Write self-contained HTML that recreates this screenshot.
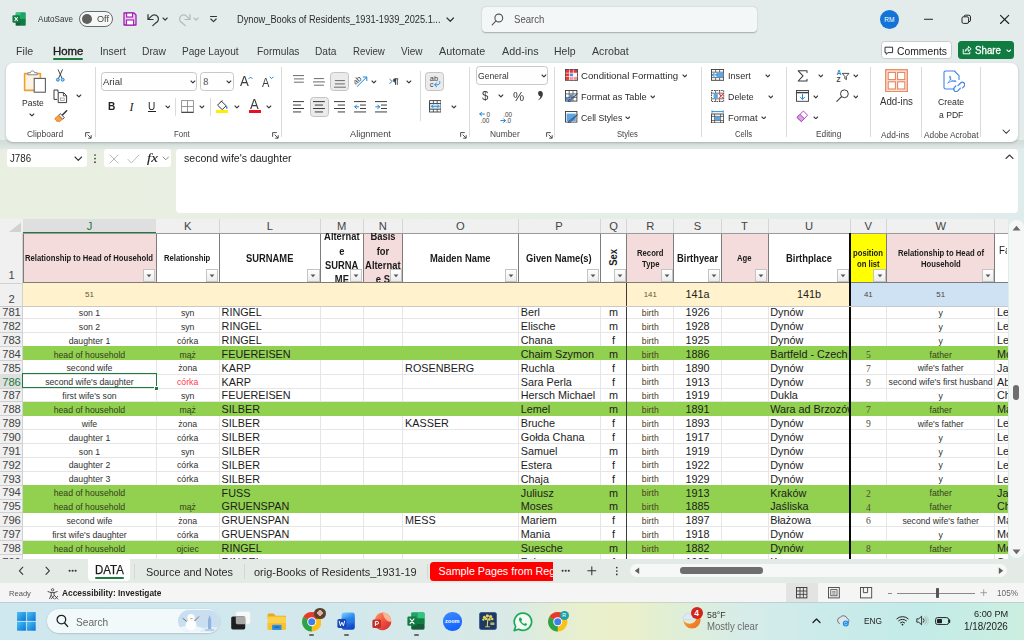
<!DOCTYPE html>
<html><head><meta charset="utf-8"><title>Excel</title><style>
html,body{margin:0;padding:0}
body{width:1024px;height:640px;overflow:hidden;position:relative;font-family:"Liberation Sans",sans-serif;
background:#e3ebeb;}
body>div,body>svg,.abs{position:absolute}
.t{white-space:nowrap}
.g{position:absolute;overflow:hidden}
.g div,.g svg{position:absolute}
</style></head><body>
<div style="left:0;top:120px;width:1024px;height:440px;background:linear-gradient(90deg,#e9efe1 0%,#e8efe2 35%,#e4eee7 65%,#dfecec 100%)"></div>
<div style="left:0;top:120px;width:1024px;height:34px;background:linear-gradient(180deg,#e3ebeb 0%,#e3ebeb 60%,rgba(227,235,235,0) 100%)"></div>
<svg style="left:11.8px;top:12.2px;" width="14" height="14" viewBox="0 0 15 15"><rect x="4" y="0.5" width="10.5" height="14" rx="1.2" fill="#21a366"/>
<rect x="4" y="0.5" width="5.2" height="7" fill="#33c481"/><rect x="9.2" y="7.5" width="5.3" height="7" fill="#107c41"/>
<rect x="9.2" y="0.5" width="5.3" height="7" fill="#21a366"/><rect x="4" y="7.5" width="5.2" height="7" fill="#185c37"/>
<rect x="0.5" y="3.5" width="8" height="8" rx="1" fill="#107c41"/>
<path d="M2.8 5.5 L6.2 9.6 M6.2 5.5 L2.8 9.6" stroke="#fff" stroke-width="1.1"/></svg>
<div class="t" style="left:38.00px;top:13.82px;font-size:9.30px;line-height:11.16px;color:#333;transform:scaleX(0.8678);transform-origin:0 50%;">AutoSave</div>
<div style="left:78.5px;top:11px;width:34px;height:15.5px;border:0.9px solid #6a6a6a;border-radius:9px;background:#f6f8f8;box-sizing:border-box"></div>
<div style="left:81.5px;top:13.7px;width:10px;height:10px;border-radius:5px;background:#5f5f5f"></div>
<div class="t" style="left:96.50px;top:13.34px;font-size:9.76px;line-height:11.71px;color:#444;transform:scaleX(0.9346);transform-origin:0 50%;">Off</div>
<svg style="left:122.5px;top:12px;" width="14" height="14" viewBox="0 0 14 14"><path d="M1 1 H11 L13 3 V13 H1 Z" fill="#e9c9ef" stroke="#a020b0" stroke-width="1.3" stroke-linejoin="round"/>
<rect x="3.6" y="1" width="6" height="4" fill="#fff" stroke="#a020b0" stroke-width="1.1"/>
<rect x="3.4" y="8" width="7.2" height="5" fill="#fff" stroke="#a020b0" stroke-width="1.1"/></svg>
<svg style="left:145.5px;top:11.5px;" width="16" height="15" viewBox="0 0 16 15"><path d="M2 2.5 V7.5 H7" fill="none" stroke="#333" stroke-width="1.2" stroke-linecap="round" stroke-linejoin="round"/>
<path d="M2.3 7.2 L5.2 4.3 A4.1 4.1 0 1 1 10.2 10.6 L6.8 13.6" fill="none" stroke="#333" stroke-width="1.2" stroke-linecap="round"/></svg>
<svg style="left:162.4px;top:17.25px;" width="6.2" height="4.1" viewBox="0 0 6.2 4.1"><path d="M1 1 L3.1 3.1 L5.2 1" fill="none" stroke="#333" stroke-width="1.1" stroke-linecap="round" stroke-linejoin="round"/></svg>
<svg style="left:176px;top:11.5px;" width="16" height="15" viewBox="0 0 16 15"><path d="M14 2.5 V7.5 H9" fill="none" stroke="#b4b8b8" stroke-width="1.2" stroke-linecap="round" stroke-linejoin="round"/>
<path d="M13.7 7.2 L10.8 4.3 A4.1 4.1 0 1 0 5.8 10.6 L9.2 13.6" fill="none" stroke="#b4b8b8" stroke-width="1.2" stroke-linecap="round"/></svg>
<svg style="left:192.9px;top:17.25px;" width="6.2" height="4.1" viewBox="0 0 6.2 4.1"><path d="M1 1 L3.1 3.1 L5.2 1" fill="none" stroke="#b4b8b8" stroke-width="1.1" stroke-linecap="round" stroke-linejoin="round"/></svg>
<svg style="left:209px;top:15px;" width="9" height="9" viewBox="0 0 9 9"><path d="M1.5 1.5 H7.5" stroke="#333" stroke-width="1.1" stroke-linecap="round"/><path d="M1.8 4 L4.5 6.7 L7.2 4" fill="none" stroke="#333" stroke-width="1.1" stroke-linecap="round" stroke-linejoin="round"/></svg>
<div class="t" style="left:237.00px;top:13.80px;font-size:10.00px;line-height:12.00px;color:#2b2b2b;transform:scaleX(0.9243);transform-origin:0 50%;">Dynow_Books of Residents_1931-1939_2025.1...</div>
<svg style="left:445.95px;top:16.675px;" width="8.5" height="5.25" viewBox="0 0 8.5 5.25"><path d="M1 1 L4.25 4.25 L7.5 1" fill="none" stroke="#333" stroke-width="1.2" stroke-linecap="round" stroke-linejoin="round"/></svg>
<div style="left:481.5px;top:7px;width:275.5px;height:24.5px;background:#f4f7f7;border-radius:4px;box-shadow:0 0.5px 1.5px rgba(0,0,0,.28);"></div>
<svg style="left:491px;top:12.5px;" width="13" height="13" viewBox="0 0 13 13"><circle cx="7.8" cy="5" r="3.9" fill="none" stroke="#555" stroke-width="1.1"/><path d="M5 7.9 L1.2 11.8" stroke="#555" stroke-width="1.1" stroke-linecap="round"/></svg>
<div class="t" style="left:514.20px;top:14.40px;font-size:10.00px;line-height:12.00px;color:#555;transform:scaleX(0.9594);transform-origin:0 50%;">Search</div>
<div style="left:879.5px;top:9.5px;width:19.5px;height:19.5px;border-radius:10px;background:#1473d6"></div>
<div class="t" style="left:884.17px;top:15.54px;font-size:6.60px;line-height:7.92px;color:#fff;">RM</div>
<svg style="left:923px;top:14px;" width="12" height="11" viewBox="0 0 12 11"><path d="M1.5 5.2 H9.5" stroke="#222" stroke-width="1.1" stroke-linecap="round"/></svg>
<svg style="left:961.3px;top:13.6px;" width="11" height="11" viewBox="0 0 11 11"><rect x="1" y="2.8" width="6.6" height="6.6" rx="1.5" fill="none" stroke="#222" stroke-width="1"/><path d="M3 2.6 A1.5 1.5 0 0 1 4.4 1.2 H7.8 A1.7 1.7 0 0 1 9.5 2.9 V6.2 A1.5 1.5 0 0 1 8 7.7" fill="none" stroke="#222" stroke-width="1"/></svg>
<svg style="left:999px;top:13.5px;" width="12" height="12" viewBox="0 0 12 12"><path d="M1.5 1.3 L9.7 9.5 M9.7 1.3 L1.5 9.5" stroke="#222" stroke-width="1.15" stroke-linecap="round"/></svg>
<div class="t" style="left:16.30px;top:45.18px;font-size:10.70px;line-height:12.84px;color:#3a3a3a;transform:scaleX(0.9976);transform-origin:0 50%;">File</div>
<div class="t" style="left:53.00px;top:45.18px;font-size:10.70px;line-height:12.84px;color:#1b1b1b;transform:scaleX(1.0616);transform-origin:0 50%;-webkit-text-stroke:0.35px #1b1b1b;">Home</div>
<div class="t" style="left:99.50px;top:45.18px;font-size:10.70px;line-height:12.84px;color:#3a3a3a;transform:scaleX(0.9641);transform-origin:0 50%;">Insert</div>
<div class="t" style="left:142.00px;top:45.18px;font-size:10.70px;line-height:12.84px;color:#3a3a3a;transform:scaleX(0.9612);transform-origin:0 50%;">Draw</div>
<div class="t" style="left:182.30px;top:45.18px;font-size:10.70px;line-height:12.84px;color:#3a3a3a;transform:scaleX(0.9436);transform-origin:0 50%;">Page Layout</div>
<div class="t" style="left:256.50px;top:45.18px;font-size:10.70px;line-height:12.84px;color:#3a3a3a;transform:scaleX(0.9530);transform-origin:0 50%;">Formulas</div>
<div class="t" style="left:314.50px;top:45.18px;font-size:10.70px;line-height:12.84px;color:#3a3a3a;transform:scaleX(0.9512);transform-origin:0 50%;">Data</div>
<div class="t" style="left:352.50px;top:45.18px;font-size:10.70px;line-height:12.84px;color:#3a3a3a;transform:scaleX(0.9064);transform-origin:0 50%;">Review</div>
<div class="t" style="left:401.00px;top:45.18px;font-size:10.70px;line-height:12.84px;color:#3a3a3a;transform:scaleX(0.9348);transform-origin:0 50%;">View</div>
<div class="t" style="left:439.00px;top:45.18px;font-size:10.70px;line-height:12.84px;color:#3a3a3a;transform:scaleX(1.0087);transform-origin:0 50%;">Automate</div>
<div class="t" style="left:501.70px;top:45.18px;font-size:10.70px;line-height:12.84px;color:#3a3a3a;transform:scaleX(1.0088);transform-origin:0 50%;">Add-ins</div>
<div class="t" style="left:554.30px;top:45.18px;font-size:10.70px;line-height:12.84px;color:#3a3a3a;transform:scaleX(0.9815);transform-origin:0 50%;">Help</div>
<div class="t" style="left:591.60px;top:45.18px;font-size:10.70px;line-height:12.84px;color:#3a3a3a;transform:scaleX(0.9979);transform-origin:0 50%;">Acrobat</div>
<div style="left:53.3px;top:58.2px;width:30px;height:1.8px;background:#1e7b3e;border-radius:1px"></div>
<div style="left:880.5px;top:40.7px;width:71px;height:18.6px;background:#fff;border:1px solid #c9cccc;border-radius:3.5px;box-sizing:border-box"></div>
<svg style="left:884px;top:45.5px;" width="10" height="10" viewBox="0 0 10 10"><path d="M1 1.2 H8.6 V6.6 H4 L2.2 8.4 V6.6 H1 Z" fill="none" stroke="#333" stroke-width="1" stroke-linejoin="round"/></svg>
<div class="t" style="left:896.70px;top:44.56px;font-size:11.07px;line-height:13.28px;color:#222;transform:scaleX(0.9346);transform-origin:0 50%;">Comments</div>
<div style="left:958.4px;top:40.7px;width:56px;height:18.6px;background:#107c41;border-radius:3.5px"></div>
<svg style="left:962px;top:45px;" width="10" height="10" viewBox="0 0 10 10"><path d="M1.2 4.2 V8.8 H7.8 V6.6" fill="none" stroke="#fff" stroke-width="1" stroke-linejoin="round"/><path d="M3.2 6.4 C3.4 4.2 4.8 3.2 6.4 3.2 V1.4 L9.2 3.9 L6.4 6.3 V4.6 C5 4.6 4 5 3.2 6.4 Z" fill="none" stroke="#fff" stroke-width="0.9" stroke-linejoin="round"/></svg>
<div class="t" style="left:974.80px;top:44.96px;font-size:10.40px;line-height:12.48px;color:#fff;transform:scaleX(0.9368);transform-origin:0 50%;-webkit-text-stroke:0.3px #fff;">Share</div>
<svg style="left:1005.8000000000001px;top:48.7px;" width="5.6" height="3.8" viewBox="0 0 5.6 3.8"><path d="M1 1 L2.8 2.8 L4.6 1" fill="none" stroke="#fff" stroke-width="1.1" stroke-linecap="round" stroke-linejoin="round"/></svg>
<div style="left:0;top:140px;width:1024px;height:9px;background:linear-gradient(180deg,#d2dbd7 0%,#d6dfdb 35%,#e0e8e4 100%)"></div>
<div style="left:6.3px;top:62.7px;width:1011.4px;height:79.5px;background:#ffffff;border-radius:7px;box-shadow:0 1px 2.5px rgba(0,0,0,.22);"></div>
<svg style="left:22.5px;top:68.5px;" width="24" height="25" viewBox="0 0 24 25"><path d="M1.6 4.6 H17.4 V21.4 H1.6 Z" fill="#fdf3e3" stroke="#f0a030" stroke-width="1.6" stroke-linejoin="round"/>
<path d="M4.8 5.8 V3.8 H7.4 C7.4 1.3 11.6 1.3 11.6 3.8 H14.2 V5.8 Z" fill="#ffffff" stroke="#7a7a7a" stroke-width="0.9"/>
<rect x="11.2" y="9.4" width="11.2" height="13.8" fill="#ffffff" stroke="#5f5f5f" stroke-width="1.1"/></svg>
<div class="t" style="left:21.50px;top:97.26px;font-size:9.90px;line-height:11.88px;color:#2b2b2b;transform:scaleX(0.8651);transform-origin:0 50%;">Paste</div>
<svg style="left:29.1px;top:113.35px;" width="5.8" height="3.9" viewBox="0 0 5.8 3.9"><path d="M1 1 L2.9 2.9 L4.8 1" fill="none" stroke="#3b3b3b" stroke-width="1.1" stroke-linecap="round" stroke-linejoin="round"/></svg>
<svg style="left:55px;top:68.5px;" width="11" height="14" viewBox="0 0 11 14"><path d="M3.2 0.8 L6.9 9 M7.4 0.8 L3.7 9" stroke="#3b3b3b" stroke-width="0.95" stroke-linecap="round"/>
<circle cx="2.9" cy="10.7" r="1.5" fill="#9ccdf2" stroke="#1a86d9" stroke-width="0.9"/><circle cx="7.7" cy="10.7" r="1.5" fill="#9ccdf2" stroke="#1a86d9" stroke-width="0.9"/></svg>
<svg style="left:53px;top:89px;" width="15" height="14.5" viewBox="0 0 15 14.5"><path d="M5 3.4 V1 H1 V10.4 H4.2" fill="none" stroke="#3b3b3b" stroke-width="1"/>
<path d="M5.2 3.6 H10.6 L13.6 6.6 V13.6 H5.2 Z" fill="#ffffff" stroke="#3b3b3b" stroke-width="1" stroke-linejoin="round"/><path d="M10.4 3.8 V6.8 H13.4" fill="none" stroke="#3b3b3b" stroke-width="0.9"/>
<rect x="7.6" y="9" width="3.6" height="2.4" fill="none" stroke="#8a8a8a" stroke-width="0.7"/></svg>
<svg style="left:76.1px;top:94.05px;" width="5.8" height="3.9" viewBox="0 0 5.8 3.9"><path d="M1 1 L2.9 2.9 L4.8 1" fill="none" stroke="#3b3b3b" stroke-width="1.1" stroke-linecap="round" stroke-linejoin="round"/></svg>
<svg style="left:53.5px;top:110px;" width="14" height="12.5" viewBox="0 0 14 12.5"><path d="M8.2 5.2 L12.6 0.8" stroke="#3b3b3b" stroke-width="1.6" stroke-linecap="round"/>
<path d="M6.2 3.6 L10.4 7.6 L8.6 9.2 L4.6 5.2 Z" fill="#ffffff" stroke="#3b3b3b" stroke-width="0.9" stroke-linejoin="round"/>
<path d="M4.4 5.6 L8.2 9.4 L5.2 11.8 L3.8 10.6 L3.4 11.8 L0.8 8.6 Z" fill="#f5a545" stroke="#e8761a" stroke-width="0.9" stroke-linejoin="round"/></svg>
<div class="t" style="left:27.30px;top:129.06px;font-size:8.90px;line-height:10.68px;color:#444;transform:scaleX(0.9502);transform-origin:0 50%;">Clipboard</div>
<svg style="left:85.2px;top:131.9px;" width="7" height="7" viewBox="0 0 7 7"><path d="M0.6 4.8 V0.6 H4.8" fill="none" stroke="#3b3b3b" stroke-width="0.9"/><path d="M2.6 2.6 L6 6 M6.2 3.2 V6.2 H3.2" fill="none" stroke="#3b3b3b" stroke-width="0.9"/></svg>
<div style="left:94.69999999999999px;top:66.8px;width:0.9px;height:70.2px;background:#d9dcdb;"></div>
<div style="left:101.4px;top:71.8px;width:96px;height:19.7px;border:1px solid #c6c9c9;border-radius:3.5px;box-sizing:border-box;background:#fdfefd"></div>
<div class="t" style="left:102.80px;top:76.16px;font-size:9.90px;line-height:11.88px;color:#333;transform:scaleX(0.9643);transform-origin:0 50%;">Arial</div>
<svg style="left:190.1px;top:80.05px;" width="5.8" height="3.9" viewBox="0 0 5.8 3.9"><path d="M1 1 L2.9 2.9 L4.8 1" fill="none" stroke="#3b3b3b" stroke-width="1.1" stroke-linecap="round" stroke-linejoin="round"/></svg>
<div style="left:199.8px;top:71.8px;width:34.2px;height:19.7px;border:1px solid #c6c9c9;border-radius:3.5px;box-sizing:border-box;background:#fdfefd"></div>
<div class="t" style="left:203.30px;top:75.90px;font-size:10.00px;line-height:12.00px;color:#444;font-family:'Liberation Serif',serif;">8</div>
<svg style="left:226.1px;top:80.05px;" width="5.8" height="3.9" viewBox="0 0 5.8 3.9"><path d="M1 1 L2.9 2.9 L4.8 1" fill="none" stroke="#3b3b3b" stroke-width="1.1" stroke-linecap="round" stroke-linejoin="round"/></svg>
<div class="t" style="left:239.80px;top:73.27px;font-size:14.12px;line-height:16.94px;color:#3b3b3b;transform:scaleX(0.9346);transform-origin:0 50%;">A</div>
<svg style="left:247.70000000000002px;top:76.2px;" width="5.2" height="3.6" viewBox="0 0 5.2 3.6"><path d="M1 2.6 L2.6 1 L4.2 2.6" fill="none" stroke="#1a86d9" stroke-width="1.0" stroke-linecap="round" stroke-linejoin="round"/></svg>
<div class="t" style="left:261.90px;top:75.60px;font-size:11.87px;line-height:14.24px;color:#3b3b3b;transform:scaleX(0.9346);transform-origin:0 50%;">A</div>
<svg style="left:268.59999999999997px;top:75.8px;" width="5.2" height="3.6" viewBox="0 0 5.2 3.6"><path d="M1 1 L2.6 2.6 L4.2 1" fill="none" stroke="#1a86d9" stroke-width="1.0" stroke-linecap="round" stroke-linejoin="round"/></svg>
<div class="t" style="left:107.55px;top:100.31px;font-size:11.00px;line-height:13.20px;color:#222;font-weight:bold;transform:scaleX(0.9200);transform-origin:0 50%;">B</div>
<div class="t" style="left:129.50px;top:99.64px;font-size:12.00px;line-height:14.40px;color:#222;font-style:italic;font-family:'Liberation Serif',serif;">I</div>
<div class="t" style="left:148.40px;top:99.82px;font-size:10.82px;line-height:12.98px;color:#222;transform:scaleX(0.9346);transform-origin:0 50%;">U</div>
<div style="left:148.4px;top:111.4px;width:7.3px;height:0.9px;background:#222;"></div>
<svg style="left:164.5px;top:105.25px;" width="5.8" height="3.9" viewBox="0 0 5.8 3.9"><path d="M1 1 L2.9 2.9 L4.8 1" fill="none" stroke="#3b3b3b" stroke-width="1.1" stroke-linecap="round" stroke-linejoin="round"/></svg>
<div style="left:175px;top:98px;width:0.9px;height:18px;background:#d9dcdb;"></div>
<svg style="left:180.5px;top:100.3px;" width="13" height="13" viewBox="0 0 13 13"><rect x="0.6" y="0.6" width="11.8" height="11.8" fill="none" stroke="#8c8c8c" stroke-width="0.9"/><path d="M6.5 0.6 V12.4 M0.6 6.5 H12.4" stroke="#8c8c8c" stroke-width="0.9"/><path d="M0.5 12.3 H12.5" stroke="#3b3b3b" stroke-width="1.1"/></svg>
<svg style="left:199.1px;top:105.25px;" width="5.8" height="3.9" viewBox="0 0 5.8 3.9"><path d="M1 1 L2.9 2.9 L4.8 1" fill="none" stroke="#3b3b3b" stroke-width="1.1" stroke-linecap="round" stroke-linejoin="round"/></svg>
<div style="left:210.1px;top:98px;width:0.9px;height:18px;background:#d9dcdb;"></div>
<svg style="left:216px;top:99.5px;" width="13" height="11" viewBox="0 0 13 11"><path d="M5.4 1.2 L10.2 5.8 L6.2 9.6 L1.6 5.2 Z" fill="none" stroke="#3b3b3b" stroke-width="1" stroke-linejoin="round"/>
<path d="M4.4 2.2 L6.6 0.6" stroke="#3b3b3b" stroke-width="0.9"/><path d="M10.4 5.6 C11.6 7 12 8 11.2 8.8 C10.4 9.4 9.6 8.6 10.4 5.6Z" fill="#1a86d9"/></svg>
<div style="left:216.4px;top:110.4px;width:11.8px;height:2.8px;background:#ffee00;"></div>
<svg style="left:234.0px;top:105.25px;" width="5.8" height="3.9" viewBox="0 0 5.8 3.9"><path d="M1 1 L2.9 2.9 L4.8 1" fill="none" stroke="#3b3b3b" stroke-width="1.1" stroke-linecap="round" stroke-linejoin="round"/></svg>
<div class="t" style="left:250.30px;top:96.37px;font-size:13.96px;line-height:16.75px;color:#3b3b3b;transform:scaleX(0.9346);transform-origin:0 50%;">A</div>
<div style="left:248.6px;top:110.4px;width:12.1px;height:2.8px;background:#e81123;"></div>
<svg style="left:266.1px;top:105.25px;" width="5.8" height="3.9" viewBox="0 0 5.8 3.9"><path d="M1 1 L2.9 2.9 L4.8 1" fill="none" stroke="#3b3b3b" stroke-width="1.1" stroke-linecap="round" stroke-linejoin="round"/></svg>
<div class="t" style="left:173.80px;top:129.06px;font-size:8.90px;line-height:10.68px;color:#444;transform:scaleX(0.8816);transform-origin:0 50%;">Font</div>
<svg style="left:272.2px;top:131.9px;" width="7" height="7" viewBox="0 0 7 7"><path d="M0.6 4.8 V0.6 H4.8" fill="none" stroke="#3b3b3b" stroke-width="0.9"/><path d="M2.6 2.6 L6 6 M6.2 3.2 V6.2 H3.2" fill="none" stroke="#3b3b3b" stroke-width="0.9"/></svg>
<div style="left:281.40000000000003px;top:66.8px;width:0.9px;height:70.2px;background:#d9dcdb;"></div>
<svg style="left:292.5px;top:75.4px;" width="11.8" height="11.099999999999998" viewBox="0 0 11.8 11.099999999999998"><path d="M0.3 0.6 H11.5" stroke="#6a6a6a" stroke-width="1.0" stroke-linecap="round"/><path d="M1.3 3.9 H10.5" stroke="#6a6a6a" stroke-width="1.0" stroke-linecap="round"/><path d="M1.3 7.199999999999999 H10.5" stroke="#6a6a6a" stroke-width="1.0" stroke-linecap="round"/></svg>
<svg style="left:313px;top:77.6px;" width="11.8" height="11.099999999999998" viewBox="0 0 11.8 11.099999999999998"><path d="M1.3 0.6 H10.5" stroke="#6a6a6a" stroke-width="1.0" stroke-linecap="round"/><path d="M0.3 3.9 H11.5" stroke="#6a6a6a" stroke-width="1.0" stroke-linecap="round"/><path d="M1.3 7.199999999999999 H10.5" stroke="#6a6a6a" stroke-width="1.0" stroke-linecap="round"/></svg>
<div style="left:330.2px;top:71.8px;width:19px;height:19.5px;background:#ebebeb;border:1px solid #c4c4c4;border-radius:3.5px;box-sizing:border-box"></div>
<svg style="left:334.2px;top:79.8px;" width="11.8" height="11.099999999999998" viewBox="0 0 11.8 11.099999999999998"><path d="M1.3 0.6 H10.5" stroke="#6a6a6a" stroke-width="1.0" stroke-linecap="round"/><path d="M1.3 3.9 H10.5" stroke="#6a6a6a" stroke-width="1.0" stroke-linecap="round"/><path d="M0.3 7.199999999999999 H11.5" stroke="#6a6a6a" stroke-width="1.0" stroke-linecap="round"/></svg>
<svg style="left:353.5px;top:74.5px;" width="14" height="12.5" viewBox="0 0 14 12.5"><text x="-0.6" y="7.4" font-family="Liberation Sans" font-size="7.8" fill="#3b3b3b" transform="rotate(-42 4 6)">ab</text><path d="M3 11.6 L12.6 2.2 M9.2 2 H12.8 V5.6" fill="none" stroke="#1a86d9" stroke-width="1" stroke-linecap="round" stroke-linejoin="round"/></svg>
<svg style="left:371.1px;top:80.05px;" width="5.8" height="3.9" viewBox="0 0 5.8 3.9"><path d="M1 1 L2.9 2.9 L4.8 1" fill="none" stroke="#3b3b3b" stroke-width="1.1" stroke-linecap="round" stroke-linejoin="round"/></svg>
<svg style="left:389px;top:78px;" width="11" height="7.5" viewBox="0 0 11 7.5"><path d="M0.8 1.2 L3 3.4 L0.8 5.6" fill="none" stroke="#1a86d9" stroke-width="1" stroke-linecap="round" stroke-linejoin="round"/><path d="M7.6 0.8 H5.8 A1.6 1.6 0 0 0 5.8 4 H6.6 V6.8 M6.6 0.8 V6.8 M8.4 0.8 V6.8 M6 0.8 H9.4" fill="none" stroke="#3b3b3b" stroke-width="0.8"/><circle cx="5.8" cy="2.4" r="1.3" fill="#3b3b3b"/></svg>
<svg style="left:406.40000000000003px;top:80.05px;" width="5.8" height="3.9" viewBox="0 0 5.8 3.9"><path d="M1 1 L2.9 2.9 L4.8 1" fill="none" stroke="#3b3b3b" stroke-width="1.1" stroke-linecap="round" stroke-linejoin="round"/></svg>
<div style="left:420.2px;top:70.7px;width:0.9px;height:50px;background:#d9dcdb;"></div>
<div style="left:425.3px;top:71.8px;width:19.2px;height:19.5px;background:#ebebeb;border:1px solid #c4c4c4;border-radius:3.5px;box-sizing:border-box"></div>
<svg style="left:429px;top:75px;" width="12.5" height="13.5" viewBox="0 0 12.5 13.5"><text x="0.8" y="5.8" font-family="Liberation Sans" font-size="7.4" fill="#3b3b3b">ab</text><text x="0.8" y="12" font-family="Liberation Sans" font-size="7.4" fill="#3b3b3b">c</text><path d="M10.8 6.6 C11.4 9.4 9.4 10.2 6 9.8 M7.6 7.8 L5.6 9.8 L7.6 11.8" fill="none" stroke="#1a86d9" stroke-width="0.95" stroke-linecap="round" stroke-linejoin="round"/></svg>
<svg style="left:292.5px;top:101.4px;" width="11.8" height="15.0" viewBox="0 0 11.8 15.0"><path d="M0.3 0.6 H11.5" stroke="#3b3b3b" stroke-width="1.0" stroke-linecap="round"/><path d="M0.3 4.05 H7.7" stroke="#3b3b3b" stroke-width="1.0" stroke-linecap="round"/><path d="M0.3 7.5 H11.5" stroke="#3b3b3b" stroke-width="1.0" stroke-linecap="round"/><path d="M0.3 10.950000000000001 H7.7" stroke="#3b3b3b" stroke-width="1.0" stroke-linecap="round"/></svg>
<div style="left:309.5px;top:97.3px;width:19.2px;height:19.5px;background:#ebebeb;border:1px solid #c4c4c4;border-radius:3.5px;box-sizing:border-box"></div>
<svg style="left:313.2px;top:101.4px;" width="11.8" height="15.0" viewBox="0 0 11.8 15.0"><path d="M0.3 0.6 H11.5" stroke="#3b3b3b" stroke-width="1.0" stroke-linecap="round"/><path d="M2.2 4.05 H9.6" stroke="#3b3b3b" stroke-width="1.0" stroke-linecap="round"/><path d="M0.3 7.5 H11.5" stroke="#3b3b3b" stroke-width="1.0" stroke-linecap="round"/><path d="M2.2 10.950000000000001 H9.6" stroke="#3b3b3b" stroke-width="1.0" stroke-linecap="round"/></svg>
<svg style="left:333.7px;top:101.4px;" width="11.8" height="15.0" viewBox="0 0 11.8 15.0"><path d="M0.3 0.6 H11.5" stroke="#3b3b3b" stroke-width="1.0" stroke-linecap="round"/><path d="M4.1000000000000005 4.05 H11.5" stroke="#3b3b3b" stroke-width="1.0" stroke-linecap="round"/><path d="M0.3 7.5 H11.5" stroke="#3b3b3b" stroke-width="1.0" stroke-linecap="round"/><path d="M4.1000000000000005 10.950000000000001 H11.5" stroke="#3b3b3b" stroke-width="1.0" stroke-linecap="round"/></svg>
<svg style="left:354.4px;top:101.4px;" width="12.2" height="12" viewBox="0 0 12.2 12"><path d="M0.4 0.6 H11.6 M6.4 4.05 H11.6 M6.4 7.5 H11.6 M0.4 10.95 H11.6" stroke="#3b3b3b" stroke-width="1" stroke-linecap="round"/><path d="M0.8 5.8 H4.6 M2.6 4 L0.8 5.8 L2.6 7.6" fill="none" stroke="#1a86d9" stroke-width="1" stroke-linecap="round" stroke-linejoin="round"/></svg>
<svg style="left:375px;top:101.4px;" width="12.2" height="12" viewBox="0 0 12.2 12"><path d="M0.4 0.6 H11.6 M6.4 4.05 H11.6 M6.4 7.5 H11.6 M0.4 10.95 H11.6" stroke="#3b3b3b" stroke-width="1" stroke-linecap="round"/><path d="M0.8 5.8 H4.6 M2.8 4 L4.6 5.8 L2.8 7.6" fill="none" stroke="#1a86d9" stroke-width="1" stroke-linecap="round" stroke-linejoin="round"/></svg>
<svg style="left:428.6px;top:100.4px;" width="12.6" height="12.6" viewBox="0 0 12.6 12.6"><rect x="0.6" y="0.6" width="11.4" height="11.4" fill="none" stroke="#3b3b3b" stroke-width="0.9"/><rect x="0.6" y="3.4" width="11.4" height="5.8" fill="#d6ebfa" stroke="#3b3b3b" stroke-width="0.9"/><path d="M4.4 0.6 V3.4 M8.2 0.6 V3.4 M4.4 9.2 V12 M8.2 9.2 V12" stroke="#3b3b3b" stroke-width="0.8"/><path d="M2.6 6.3 H10 M4 4.9 L2.6 6.3 L4 7.7 M8.6 4.9 L10 6.3 L8.6 7.7" fill="none" stroke="#1a86d9" stroke-width="0.9" stroke-linecap="round" stroke-linejoin="round"/></svg>
<svg style="left:450.90000000000003px;top:105.25px;" width="5.8" height="3.9" viewBox="0 0 5.8 3.9"><path d="M1 1 L2.9 2.9 L4.8 1" fill="none" stroke="#3b3b3b" stroke-width="1.1" stroke-linecap="round" stroke-linejoin="round"/></svg>
<div class="t" style="left:350.00px;top:129.06px;font-size:8.90px;line-height:10.68px;color:#444;transform:scaleX(1.0359);transform-origin:0 50%;">Alignment</div>
<svg style="left:459.8px;top:131.9px;" width="7" height="7" viewBox="0 0 7 7"><path d="M0.6 4.8 V0.6 H4.8" fill="none" stroke="#3b3b3b" stroke-width="0.9"/><path d="M2.6 2.6 L6 6 M6.2 3.2 V6.2 H3.2" fill="none" stroke="#3b3b3b" stroke-width="0.9"/></svg>
<div style="left:469.40000000000003px;top:66.8px;width:0.9px;height:70.2px;background:#d9dcdb;"></div>
<div style="left:476.3px;top:65.6px;width:72.1px;height:19.2px;border:1px solid #c6c9c9;border-radius:3.5px;box-sizing:border-box;background:#fdfefd"></div>
<div class="t" style="left:478.20px;top:69.96px;font-size:9.90px;line-height:11.88px;color:#333;transform:scaleX(0.8716);transform-origin:0 50%;">General</div>
<svg style="left:541.1px;top:73.85px;" width="5.8" height="3.9" viewBox="0 0 5.8 3.9"><path d="M1 1 L2.9 2.9 L4.8 1" fill="none" stroke="#3b3b3b" stroke-width="1.1" stroke-linecap="round" stroke-linejoin="round"/></svg>
<div class="t" style="left:482.32px;top:88.31px;font-size:13.60px;line-height:16.32px;color:#3b3b3b;transform:scaleX(0.8400);transform-origin:0 50%;">$</div>
<svg style="left:498.1px;top:94.35px;" width="5.8" height="3.9" viewBox="0 0 5.8 3.9"><path d="M1 1 L2.9 2.9 L4.8 1" fill="none" stroke="#3b3b3b" stroke-width="1.1" stroke-linecap="round" stroke-linejoin="round"/></svg>
<div class="t" style="left:512.97px;top:88.54px;font-size:13.20px;line-height:15.84px;color:#3b3b3b;transform:scaleX(0.9600);transform-origin:0 50%;">%</div>
<svg style="left:535.6px;top:90.4px;" width="8.4" height="12" viewBox="0 0 7 10"><path d="M3.4 0.8 C5.4 0.8 6 2.6 5.6 4.4 C5.2 6.2 3.8 7.8 1.6 8.6 C3 7.4 3.6 6.2 3.6 5.2 C1.6 5.2 0.8 0.8 3.4 0.8Z" fill="#3b3b3b"/></svg>
<svg style="left:479.4px;top:110.5px;" width="13.5" height="13" viewBox="0 0 13.5 13"><path d="M0.8 3 H5.4 M2.6 1.2 L0.8 3 L2.6 4.8" fill="none" stroke="#1a86d9" stroke-width="1" stroke-linecap="round" stroke-linejoin="round"/><text x="7.6" y="5.6" font-family="Liberation Sans" font-size="6.4" fill="#3b3b3b">0</text><text x="1.4" y="12.2" font-family="Liberation Sans" font-size="6.4" fill="#3b3b3b">.00</text></svg>
<svg style="left:500px;top:110.5px;" width="13.5" height="13" viewBox="0 0 13.5 13"><text x="3.2" y="5.6" font-family="Liberation Sans" font-size="6.4" fill="#3b3b3b">.00</text><path d="M0.8 9.6 H5.4 M3.6 7.8 L5.4 9.6 L3.6 11.4" fill="none" stroke="#1a86d9" stroke-width="1" stroke-linecap="round" stroke-linejoin="round"/><text x="5.8" y="12.2" font-family="Liberation Sans" font-size="6.4" fill="#3b3b3b">.0</text></svg>
<div class="t" style="left:490.40px;top:129.06px;font-size:8.90px;line-height:10.68px;color:#444;transform:scaleX(0.9414);transform-origin:0 50%;">Number</div>
<svg style="left:545.6px;top:131.9px;" width="7" height="7" viewBox="0 0 7 7"><path d="M0.6 4.8 V0.6 H4.8" fill="none" stroke="#3b3b3b" stroke-width="0.9"/><path d="M2.6 2.6 L6 6 M6.2 3.2 V6.2 H3.2" fill="none" stroke="#3b3b3b" stroke-width="0.9"/></svg>
<div style="left:554.4px;top:66.8px;width:0.9px;height:70.2px;background:#d9dcdb;"></div>
<svg style="left:564.6px;top:69.4px;" width="13" height="11.8" viewBox="0 0 13 11.8"><rect x="0.5" y="0.5" width="12" height="10.8" fill="#ffffff" stroke="#3b3b3b" stroke-width="0.9"/><rect x="0.9" y="0.9" width="3.6" height="10" fill="#e8383d"/><rect x="4.5" y="0.9" width="7.6" height="3.2" fill="#e8383d"/><rect x="4.5" y="7.6" width="7.6" height="3.3" fill="#f29a9d"/><rect x="4.6" y="4.3" width="3.6" height="3.2" fill="#4a90d9"/><path d="M0.5 4.1 H12.5 M0.5 7.5 H12.5 M4.5 0.5 V11.3 M8.4 0.5 V11.3" stroke="#fff" stroke-width="0.6"/></svg>
<div class="t" style="left:581.00px;top:70.26px;font-size:9.90px;line-height:11.88px;color:#2b2b2b;transform:scaleX(0.9779);transform-origin:0 50%;">Conditional Formatting</div>
<svg style="left:681.5px;top:73.89999999999999px;" width="5.6" height="3.8" viewBox="0 0 5.6 3.8"><path d="M1 1 L2.8 2.8 L4.6 1" fill="none" stroke="#3b3b3b" stroke-width="1.1" stroke-linecap="round" stroke-linejoin="round"/></svg>
<svg style="left:564.6px;top:90px;" width="13.4" height="12.4" viewBox="0 0 13.4 12.4"><rect x="0.5" y="0.5" width="11.4" height="10.6" fill="#ffffff" stroke="#3b3b3b" stroke-width="0.9"/><path d="M0.5 3.9 H11.9 M0.5 7.4 H11.9 M4.2 0.5 V11.1 M8 0.5 V11.1" stroke="#3b3b3b" stroke-width="0.7"/><rect x="4.6" y="4.3" width="3" height="2.7" fill="#4a90d9"/><rect x="0.9" y="7.8" width="3" height="2.9" fill="#4a90d9"/><path d="M12.6 3.6 L7.6 8.8 L4.8 11.9 L3.2 11.6 L3.6 10.2 Z" fill="#4a90d9" stroke="#3b3b3b" stroke-width="0.7" stroke-linejoin="round"/></svg>
<div class="t" style="left:581.00px;top:91.16px;font-size:9.90px;line-height:11.88px;color:#2b2b2b;transform:scaleX(0.9294);transform-origin:0 50%;">Format as Table</div>
<svg style="left:649.9000000000001px;top:94.89999999999999px;" width="5.6" height="3.8" viewBox="0 0 5.6 3.8"><path d="M1 1 L2.8 2.8 L4.6 1" fill="none" stroke="#3b3b3b" stroke-width="1.1" stroke-linecap="round" stroke-linejoin="round"/></svg>
<svg style="left:564.6px;top:111px;" width="13.4" height="12.4" viewBox="0 0 13.4 12.4"><rect x="0.5" y="0.5" width="11.4" height="10.6" fill="#ffffff" stroke="#3b3b3b" stroke-width="0.9"/><rect x="1.6" y="2.6" width="9.2" height="7.4" fill="#5ba7e6"/><path d="M12.6 3.6 L7.6 8.8 L4.8 11.9 L3.2 11.6 L3.6 10.2 Z" fill="#4a90d9" stroke="#3b3b3b" stroke-width="0.7" stroke-linejoin="round"/></svg>
<div class="t" style="left:581.00px;top:111.96px;font-size:9.90px;line-height:11.88px;color:#2b2b2b;transform:scaleX(0.8853);transform-origin:0 50%;">Cell Styles</div>
<svg style="left:624.9000000000001px;top:115.69999999999999px;" width="5.6" height="3.8" viewBox="0 0 5.6 3.8"><path d="M1 1 L2.8 2.8 L4.6 1" fill="none" stroke="#3b3b3b" stroke-width="1.1" stroke-linecap="round" stroke-linejoin="round"/></svg>
<div class="t" style="left:617.10px;top:129.06px;font-size:8.90px;line-height:10.68px;color:#444;transform:scaleX(0.8623);transform-origin:0 50%;">Styles</div>
<div style="left:701.1px;top:66.8px;width:0.9px;height:70.2px;background:#d9dcdb;"></div>
<svg style="left:711.2px;top:69.4px;" width="13.2" height="11.8" viewBox="0 0 13.2 11.8"><rect x="0.5" y="0.5" width="12.2" height="10.8" fill="#ffffff" stroke="#3b3b3b" stroke-width="0.9"/><path d="M0.5 3.2 H12.7 M0.5 8.6 H12.7 M4.6 0.5 V3.2 M8.6 0.5 V3.2 M4.6 8.6 V11.3 M8.6 8.6 V11.3" stroke="#3b3b3b" stroke-width="0.7"/><rect x="5.4" y="3.6" width="6.9" height="4.6" fill="#5ba7e6"/><path d="M1.4 5.9 H6 M3 4.3 L1.4 5.9 L3 7.5" fill="none" stroke="#1a86d9" stroke-width="1" stroke-linecap="round" stroke-linejoin="round"/></svg>
<div class="t" style="left:728.00px;top:70.26px;font-size:9.90px;line-height:11.88px;color:#2b2b2b;transform:scaleX(0.9208);transform-origin:0 50%;">Insert</div>
<svg style="left:764.6px;top:73.89999999999999px;" width="5.6" height="3.8" viewBox="0 0 5.6 3.8"><path d="M1 1 L2.8 2.8 L4.6 1" fill="none" stroke="#3b3b3b" stroke-width="1.1" stroke-linecap="round" stroke-linejoin="round"/></svg>
<svg style="left:711.2px;top:90px;" width="13.6" height="12" viewBox="0 0 13.6 12"><rect x="0.5" y="0.5" width="12.2" height="11" fill="#ffffff" stroke="#3b3b3b" stroke-width="0.9" stroke-dasharray="1.6 0.8"/><path d="M0.5 3.2 H12.7 M0.5 8.8 H12.7 M4.6 0.5 V3.2 M8.6 0.5 V3.2 M4.6 8.8 V11.5 M8.6 8.8 V11.5" stroke="#3b3b3b" stroke-width="0.7"/><rect x="2.6" y="3.7" width="4.2" height="4.6" fill="#5ba7e6"/><path d="M8.4 4.2 L12 7.8 M12 4.2 L8.4 7.8" stroke="#e8383d" stroke-width="1.1" stroke-linecap="round"/></svg>
<div class="t" style="left:728.00px;top:91.16px;font-size:9.90px;line-height:11.88px;color:#2b2b2b;transform:scaleX(0.8980);transform-origin:0 50%;">Delete</div>
<svg style="left:767.9000000000001px;top:94.89999999999999px;" width="5.6" height="3.8" viewBox="0 0 5.6 3.8"><path d="M1 1 L2.8 2.8 L4.6 1" fill="none" stroke="#3b3b3b" stroke-width="1.1" stroke-linecap="round" stroke-linejoin="round"/></svg>
<svg style="left:711.2px;top:110px;" width="13.2" height="13.4" viewBox="0 0 13.2 13.4"><path d="M1 1.6 H12.2 M1 0.4 V2.8 M12.2 0.4 V2.8" stroke="#1a86d9" stroke-width="0.9"/><rect x="0.5" y="4" width="12.2" height="8.9" fill="#ffffff" stroke="#3b3b3b" stroke-width="0.9"/><path d="M0.5 6.4 H12.7 M0.5 10.6 H12.7 M3.6 4 V12.9 M9.6 4 V12.9" stroke="#3b3b3b" stroke-width="0.7"/><rect x="4" y="6.8" width="5.2" height="3.4" fill="#5ba7e6"/></svg>
<div class="t" style="left:728.00px;top:111.96px;font-size:9.90px;line-height:11.88px;color:#2b2b2b;transform:scaleX(0.9440);transform-origin:0 50%;">Format</div>
<svg style="left:760.7px;top:115.69999999999999px;" width="5.6" height="3.8" viewBox="0 0 5.6 3.8"><path d="M1 1 L2.8 2.8 L4.6 1" fill="none" stroke="#3b3b3b" stroke-width="1.1" stroke-linecap="round" stroke-linejoin="round"/></svg>
<div class="t" style="left:735.00px;top:129.06px;font-size:8.90px;line-height:10.68px;color:#444;transform:scaleX(0.8594);transform-origin:0 50%;">Cells</div>
<div style="left:786.1px;top:66.8px;width:0.9px;height:70.2px;background:#d9dcdb;"></div>
<svg style="left:797px;top:69.5px;" width="11.5" height="12" viewBox="0 0 11.5 12"><path d="M10 2.6 V0.8 H1.2 L6 5.9 L1.2 11 H10 V9.2" fill="none" stroke="#3b3b3b" stroke-width="1.05" stroke-linejoin="round" stroke-linecap="round"/></svg>
<svg style="left:818.2px;top:73.89999999999999px;" width="5.6" height="3.8" viewBox="0 0 5.6 3.8"><path d="M1 1 L2.8 2.8 L4.6 1" fill="none" stroke="#3b3b3b" stroke-width="1.1" stroke-linecap="round" stroke-linejoin="round"/></svg>
<svg style="left:835.5px;top:68.6px;" width="14" height="13.5" viewBox="0 0 14 13.5"><text x="0.4" y="6" font-family="Liberation Sans" font-size="6.6" font-weight="bold" fill="#1a86d9">A</text><text x="0.6" y="12.8" font-family="Liberation Sans" font-size="6.6" font-weight="bold" fill="#3b3b3b">Z</text><path d="M6.2 4.4 H13 L10.4 7.4 V10.6 L8.8 9.6 V7.4 Z" fill="none" stroke="#3b3b3b" stroke-width="0.9" stroke-linejoin="round"/></svg>
<svg style="left:852.9000000000001px;top:73.89999999999999px;" width="5.6" height="3.8" viewBox="0 0 5.6 3.8"><path d="M1 1 L2.8 2.8 L4.6 1" fill="none" stroke="#3b3b3b" stroke-width="1.1" stroke-linecap="round" stroke-linejoin="round"/></svg>
<svg style="left:796px;top:90px;" width="13.2" height="12" viewBox="0 0 13.2 12"><rect x="0.5" y="0.5" width="12" height="10.8" fill="#ffffff" stroke="#3b3b3b" stroke-width="0.9"/><path d="M0.5 2.6 H12.5" stroke="#3b3b3b" stroke-width="1.4"/><path d="M6.5 4.4 V9.2 M4.4 7.2 L6.5 9.3 L8.6 7.2" fill="none" stroke="#1a86d9" stroke-width="1" stroke-linecap="round" stroke-linejoin="round"/></svg>
<svg style="left:813.4000000000001px;top:94.89999999999999px;" width="5.6" height="3.8" viewBox="0 0 5.6 3.8"><path d="M1 1 L2.8 2.8 L4.6 1" fill="none" stroke="#3b3b3b" stroke-width="1.1" stroke-linecap="round" stroke-linejoin="round"/></svg>
<svg style="left:835.6px;top:89px;" width="13.5" height="13.5" viewBox="0 0 13.5 13.5"><circle cx="8.4" cy="4.8" r="3.9" fill="none" stroke="#3b3b3b" stroke-width="1"/><path d="M5.6 7.6 L0.8 12.4" stroke="#3b3b3b" stroke-width="1.1" stroke-linecap="round"/></svg>
<svg style="left:852.9000000000001px;top:94.89999999999999px;" width="5.6" height="3.8" viewBox="0 0 5.6 3.8"><path d="M1 1 L2.8 2.8 L4.6 1" fill="none" stroke="#3b3b3b" stroke-width="1.1" stroke-linecap="round" stroke-linejoin="round"/></svg>
<svg style="left:796.4px;top:110.4px;" width="12.4" height="13" viewBox="0 0 12.4 13"><path d="M7.4 1 L11.6 5.2 L5.4 11.6 L1 7.4 Z" fill="#ffffff" stroke="#b146c2" stroke-width="1" stroke-linejoin="round"/><path d="M4 4.4 L8.4 8.6 L5.4 11.6 L1 7.4 Z" fill="#d9a4e4" stroke="#b146c2" stroke-width="1" stroke-linejoin="round"/></svg>
<svg style="left:813.4000000000001px;top:115.69999999999999px;" width="5.6" height="3.8" viewBox="0 0 5.6 3.8"><path d="M1 1 L2.8 2.8 L4.6 1" fill="none" stroke="#3b3b3b" stroke-width="1.1" stroke-linecap="round" stroke-linejoin="round"/></svg>
<div class="t" style="left:815.60px;top:129.06px;font-size:8.90px;line-height:10.68px;color:#444;transform:scaleX(0.9333);transform-origin:0 50%;">Editing</div>
<div style="left:870.1px;top:66.8px;width:0.9px;height:70.2px;background:#d9dcdb;"></div>
<svg style="left:884.8px;top:68.8px;" width="23" height="23.4" viewBox="0 0 23 23.4"><rect x="0.7" y="0.7" width="21.6" height="22" fill="#fbe3d8" stroke="#e8825a" stroke-width="1.2"/><g fill="#fff" stroke="#e8825a" stroke-width="1.05"><rect x="3.2" y="3.4" width="7.2" height="7.2"/><rect x="12.6" y="3.4" width="7.2" height="7.2"/><rect x="3.2" y="12.8" width="7.2" height="7.2"/><rect x="12.6" y="12.8" width="7.2" height="7.2"/></g></svg>
<div class="t" style="left:880.00px;top:96.02px;font-size:10.30px;line-height:12.36px;color:#333;transform:scaleX(0.9420);transform-origin:0 50%;">Add-ins</div>
<div class="t" style="left:881.20px;top:129.56px;font-size:8.90px;line-height:10.68px;color:#444;transform:scaleX(0.9378);transform-origin:0 50%;">Add-ins</div>
<div style="left:920.9px;top:66.8px;width:0.9px;height:70.2px;background:#d9dcdb;"></div>
<svg style="left:943px;top:70.4px;" width="22" height="23" viewBox="0 0 22 23"><path d="M2 1 H11.4 L16 5.6 V9.4 M11.2 19 H2.6 A1.6 1.6 0 0 1 1 17.4 V2.6 A1.6 1.6 0 0 1 2.6 1" fill="none" stroke="#3f83e6" stroke-width="1.1" stroke-linejoin="round" stroke-linecap="round"/><path d="M4.6 13.2 C6.8 11.6 8 8.6 7.6 6.6 C7.2 5.4 6.2 6 6.6 7.4 C7.4 10 9.8 11.8 12.6 11.6 C13.8 11.4 13 10.4 11.6 10.6 C9 11 6.4 12 4.6 13.2 Z" fill="none" stroke="#3f83e6" stroke-width="0.8"/><g fill="none" stroke="#3f83e6" stroke-width="1.2" stroke-linecap="round"><path d="M15 15.6 L17.6 13 A2.4 2.4 0 0 1 21 16.4 L19.6 17.8"/><path d="M17.4 18.2 L14.8 20.8 A2.4 2.4 0 0 1 11.4 17.4 L12.8 16"/><path d="M14.4 18 L18 14.4" stroke-width="0"/></g></svg>
<div class="t" style="left:938.30px;top:96.26px;font-size:9.90px;line-height:11.88px;color:#2b2b2b;transform:scaleX(0.8851);transform-origin:0 50%;">Create</div>
<div class="t" style="left:939.20px;top:108.76px;font-size:9.90px;line-height:11.88px;color:#2b2b2b;transform:scaleX(0.8697);transform-origin:0 50%;">a PDF</div>
<div class="t" style="left:923.60px;top:129.56px;font-size:8.90px;line-height:10.68px;color:#444;transform:scaleX(0.9368);transform-origin:0 50%;">Adobe Acrobat</div>
<div style="left:980.4px;top:66.8px;width:0.9px;height:70.2px;background:#d9dcdb;"></div>
<svg style="left:1001.8000000000001px;top:128.95px;" width="8.6" height="5.3" viewBox="0 0 8.6 5.3"><path d="M1 1 L4.3 4.3 L7.6 1" fill="none" stroke="#3a3a3a" stroke-width="1.05" stroke-linecap="round" stroke-linejoin="round"/></svg>
<div style="left:6.8px;top:149.4px;width:80px;height:17.6px;background:#ffffff;border-radius:3px"></div>
<div class="t" style="left:10.20px;top:153.05px;font-size:10.41px;line-height:12.49px;color:#222;transform:scaleX(0.9346);transform-origin:0 50%;">J786</div>
<svg style="left:74.4px;top:156.15px;" width="8.6" height="5.3" viewBox="0 0 8.6 5.3"><path d="M1 1 L4.3 4.3 L7.6 1" fill="none" stroke="#333" stroke-width="1.1" stroke-linecap="round" stroke-linejoin="round"/></svg>
<svg style="left:93px;top:153px;" width="4" height="12" viewBox="0 0 4 12"><circle cx="2" cy="2" r="0.85" fill="#333"/><circle cx="2" cy="5.6" r="0.85" fill="#333"/><circle cx="2" cy="9.2" r="0.85" fill="#333"/></svg>
<div style="left:103.9px;top:149.4px;width:67.4px;height:17.6px;background:#ffffff;border-radius:3px"></div>
<svg style="left:108.5px;top:153.5px;" width="10" height="10" viewBox="0 0 10 10"><path d="M1 1 L9 9 M9 1 L1 9" stroke="#b9bcbc" stroke-width="1" stroke-linecap="round"/></svg>
<svg style="left:126.5px;top:153.5px;" width="13" height="10" viewBox="0 0 13 10"><path d="M1 5.5 L4.3 9 L12 1" fill="none" stroke="#b9bcbc" stroke-width="1" stroke-linecap="round" stroke-linejoin="round"/></svg>
<div class="t" style="left:146.80px;top:150.28px;font-size:13.20px;line-height:15.84px;color:#222;font-style:italic;font-family:'Liberation Serif',serif;transform:scaleX(1.1338);transform-origin:0 50%;-webkit-text-stroke:0.12px #222;">fx</div>
<svg style="left:162.25px;top:156.425px;" width="7.5" height="4.75" viewBox="0 0 7.5 4.75"><path d="M1 1 L3.75 3.75 L6.5 1" fill="none" stroke="#888" stroke-width="1" stroke-linecap="round" stroke-linejoin="round"/></svg>
<div style="left:175.8px;top:148.6px;width:842px;height:64.6px;background:#ffffff;border-radius:4px"></div>
<div class="t" style="left:183.60px;top:151.63px;font-size:11.29px;line-height:13.55px;color:#222;transform:scaleX(0.9346);transform-origin:0 50%;">second wife&#x27;s daughter</div>
<svg style="left:1005.3px;top:154.05px;" width="9" height="5.5" viewBox="0 0 9 5.5"><path d="M1 4.5 L4.5 1 L8 4.5" fill="none" stroke="#444" stroke-width="1.15" stroke-linecap="round" stroke-linejoin="round"/></svg>
<div style="left:0px;top:219px;width:1007.5px;height:339.8px;background:#ffffff;"></div>
<div style="left:0px;top:219px;width:1007.5px;height:14px;background:#eff0ef;"></div>
<div style="left:23px;top:219px;width:133px;height:14px;background:#dedfde;"></div>
<div style="left:23px;top:231.6px;width:133px;height:1.6px;background:#1e7b3e;"></div>
<svg style="left:7.5px;top:221.5px;" width="14" height="11" viewBox="0 0 14 11"><path d="M13 0.5 V10 H1 Z" fill="#d0d2d1"/></svg>
<div class="t" style="left:86.70px;top:219.90px;font-size:11.20px;line-height:13.44px;color:#1e7b3e;">J</div>
<div class="t" style="left:183.91px;top:219.90px;font-size:11.20px;line-height:13.44px;color:#444;">K</div>
<div style="left:218.9px;top:219px;width:0.8px;height:14px;background:#d4d6d5;"></div>
<div class="t" style="left:266.74px;top:219.90px;font-size:11.20px;line-height:13.44px;color:#444;">L</div>
<div style="left:320.0px;top:219px;width:0.8px;height:14px;background:#d4d6d5;"></div>
<div class="t" style="left:337.03px;top:219.90px;font-size:11.20px;line-height:13.44px;color:#444;">M</div>
<div style="left:362.6px;top:219px;width:0.8px;height:14px;background:#d4d6d5;"></div>
<div class="t" style="left:378.86px;top:219.90px;font-size:11.20px;line-height:13.44px;color:#444;">N</div>
<div style="left:402.40000000000003px;top:219px;width:0.8px;height:14px;background:#d4d6d5;"></div>
<div class="t" style="left:456.04px;top:219.90px;font-size:11.20px;line-height:13.44px;color:#444;">O</div>
<div style="left:517.6px;top:219px;width:0.8px;height:14px;background:#d4d6d5;"></div>
<div class="t" style="left:555.36px;top:219.90px;font-size:11.20px;line-height:13.44px;color:#444;">P</div>
<div style="left:599.8000000000001px;top:219px;width:0.8px;height:14px;background:#d4d6d5;"></div>
<div class="t" style="left:609.14px;top:219.90px;font-size:11.20px;line-height:13.44px;color:#444;">Q</div>
<div style="left:626.4px;top:219px;width:0.8px;height:14px;background:#d4d6d5;"></div>
<div class="t" style="left:646.26px;top:219.90px;font-size:11.20px;line-height:13.44px;color:#444;">R</div>
<div style="left:673.4px;top:219px;width:0.8px;height:14px;background:#d4d6d5;"></div>
<div class="t" style="left:693.66px;top:219.90px;font-size:11.20px;line-height:13.44px;color:#444;">S</div>
<div style="left:720.6px;top:219px;width:0.8px;height:14px;background:#d4d6d5;"></div>
<div class="t" style="left:741.08px;top:219.90px;font-size:11.20px;line-height:13.44px;color:#444;">T</div>
<div style="left:767.6px;top:219px;width:0.8px;height:14px;background:#d4d6d5;"></div>
<div class="t" style="left:804.96px;top:219.90px;font-size:11.20px;line-height:13.44px;color:#444;">U</div>
<div style="left:849.6px;top:219px;width:0.8px;height:14px;background:#d4d6d5;"></div>
<div class="t" style="left:864.56px;top:219.90px;font-size:11.20px;line-height:13.44px;color:#444;">V</div>
<div style="left:886.2px;top:219px;width:0.8px;height:14px;background:#d4d6d5;"></div>
<div class="t" style="left:935.41px;top:219.90px;font-size:11.20px;line-height:13.44px;color:#444;">W</div>
<div style="left:994.4px;top:219px;width:0.8px;height:14px;background:#d4d6d5;"></div>
<div style="left:0px;top:233px;width:23px;height:326px;background:#eff0ef;"></div>
<div style="left:22.4px;top:233px;width:0.8px;height:326px;background:#d0d2d1;"></div>
<div style="left:23px;top:233px;width:133px;height:49.60000000000002px;background:#f3dcdb;"></div>
<div style="left:363px;top:233px;width:39.80000000000001px;height:49.60000000000002px;background:#f3dcdb;"></div>
<div style="left:626.8px;top:233px;width:47.0px;height:49.60000000000002px;background:#f3dcdb;"></div>
<div style="left:721px;top:233px;width:47px;height:49.60000000000002px;background:#f3dcdb;"></div>
<div style="left:850px;top:233px;width:36.60000000000002px;height:49.60000000000002px;background:#ffff00;"></div>
<div style="left:886.6px;top:233px;width:108.19999999999993px;height:49.60000000000002px;background:#f3dcdb;"></div>
<div style="left:155.55px;top:233px;width:0.9px;height:49.60000000000002px;background:#7c7c7c;"></div>
<div style="left:218.85000000000002px;top:233px;width:0.9px;height:49.60000000000002px;background:#7c7c7c;"></div>
<div style="left:319.95px;top:233px;width:0.9px;height:49.60000000000002px;background:#7c7c7c;"></div>
<div style="left:362.55px;top:233px;width:0.9px;height:49.60000000000002px;background:#7c7c7c;"></div>
<div style="left:402.35px;top:233px;width:0.9px;height:49.60000000000002px;background:#7c7c7c;"></div>
<div style="left:517.55px;top:233px;width:0.9px;height:49.60000000000002px;background:#7c7c7c;"></div>
<div style="left:599.75px;top:233px;width:0.9px;height:49.60000000000002px;background:#7c7c7c;"></div>
<div style="left:626.3499999999999px;top:233px;width:0.9px;height:49.60000000000002px;background:#7c7c7c;"></div>
<div style="left:673.3499999999999px;top:233px;width:0.9px;height:49.60000000000002px;background:#7c7c7c;"></div>
<div style="left:720.55px;top:233px;width:0.9px;height:49.60000000000002px;background:#7c7c7c;"></div>
<div style="left:767.55px;top:233px;width:0.9px;height:49.60000000000002px;background:#7c7c7c;"></div>
<div style="left:849.55px;top:233px;width:0.9px;height:49.60000000000002px;background:#7c7c7c;"></div>
<div style="left:886.15px;top:233px;width:0.9px;height:49.60000000000002px;background:#7c7c7c;"></div>
<div style="left:994.3499999999999px;top:233px;width:0.9px;height:49.60000000000002px;background:#7c7c7c;"></div>
<div style="left:22.6px;top:233px;width:0.9px;height:49.60000000000002px;background:#7c7c7c;"></div>
<div style="left:23px;top:282.0px;width:984.5px;height:1.0px;background:#7c7c7c;"></div>
<div style="left:23px;top:232.7px;width:984.5px;height:0.7px;background:#9a9a9a;"></div>
<div class="t" style="left:8.39px;top:269.30px;font-size:11.20px;line-height:13.44px;color:#444;">1</div>
<div class="t" style="left:25.31px;top:253.33px;font-size:8.40px;line-height:10.08px;color:#1a1a1a;font-weight:bold;transform:scaleX(0.9200);transform-origin:0 50%;">Relationship to Head of Household</div>
<div class="t" style="left:164.46px;top:253.33px;font-size:8.40px;line-height:10.08px;color:#1a1a1a;font-weight:bold;transform:scaleX(0.9200);transform-origin:0 50%;">Relationship</div>
<div class="t" style="left:246.15px;top:252.11px;font-size:10.50px;line-height:12.60px;color:#1a1a1a;font-weight:bold;transform:scaleX(0.8930);transform-origin:0 50%;">SURNAME</div>
<div class="t" style="left:430.18px;top:252.11px;font-size:10.50px;line-height:12.60px;color:#1a1a1a;font-weight:bold;transform:scaleX(0.8930);transform-origin:0 50%;">Maiden Name</div>
<div class="t" style="left:526.27px;top:252.11px;font-size:10.50px;line-height:12.60px;color:#1a1a1a;font-weight:bold;transform:scaleX(0.8930);transform-origin:0 50%;">Given Name(s)</div>
<div class="t" style="left:636.99px;top:247.68px;font-size:8.40px;line-height:10.08px;color:#1a1a1a;font-weight:bold;transform:scaleX(0.9200);transform-origin:0 50%;">Record</div>
<div class="t" style="left:641.57px;top:258.98px;font-size:8.40px;line-height:10.08px;color:#1a1a1a;font-weight:bold;transform:scaleX(0.9200);transform-origin:0 50%;">Type</div>
<div class="t" style="left:676.82px;top:252.11px;font-size:10.50px;line-height:12.60px;color:#1a1a1a;font-weight:bold;transform:scaleX(0.8930);transform-origin:0 50%;">Birthyear</div>
<div class="t" style="left:737.20px;top:253.33px;font-size:8.40px;line-height:10.08px;color:#1a1a1a;font-weight:bold;transform:scaleX(0.9200);transform-origin:0 50%;">Age</div>
<div class="t" style="left:786.07px;top:252.11px;font-size:10.50px;line-height:12.60px;color:#1a1a1a;font-weight:bold;transform:scaleX(0.8930);transform-origin:0 50%;">Birthplace</div>
<div class="t" style="left:853.28px;top:247.68px;font-size:8.40px;line-height:10.08px;color:#1a1a1a;font-weight:bold;transform:scaleX(0.9200);transform-origin:0 50%;">position</div>
<div class="t" style="left:856.92px;top:258.98px;font-size:8.40px;line-height:10.08px;color:#1a1a1a;font-weight:bold;transform:scaleX(0.9200);transform-origin:0 50%;">on list</div>
<div class="t" style="left:897.55px;top:247.68px;font-size:8.40px;line-height:10.08px;color:#1a1a1a;font-weight:bold;transform:scaleX(0.9200);transform-origin:0 50%;">Relationship to Head of</div>
<div class="t" style="left:920.74px;top:258.98px;font-size:8.40px;line-height:10.08px;color:#1a1a1a;font-weight:bold;transform:scaleX(0.9200);transform-origin:0 50%;">Household</div>
<div class="g" style="left:320.4px;top:233px;width:42.60000000000002px;height:49.00000000000002px">
<div class="t" style="left:1.46px;top:-2.79px;font-size:10.5px;line-height:12.60px;font-weight:bold;color:#1a1a1a;transform:scaleX(0.893);transform-origin:50% 50%">Alternat</div>
<div class="t" style="left:18.38px;top:11.61px;font-size:10.5px;line-height:12.60px;font-weight:bold;color:#1a1a1a;transform:scaleX(0.893);transform-origin:50% 50%">e</div>
<div class="t" style="left:2.63px;top:26.01px;font-size:10.5px;line-height:12.60px;font-weight:bold;color:#1a1a1a;transform:scaleX(0.893);transform-origin:50% 50%">SURNA</div>
<div class="t" style="left:13.42px;top:40.41px;font-size:10.5px;line-height:12.60px;font-weight:bold;color:#1a1a1a;transform:scaleX(0.893);transform-origin:50% 50%">ME</div>
</div>
<div class="g" style="left:363px;top:233px;width:39.80000000000001px;height:49.00000000000002px">
<div class="t" style="left:5.89px;top:-2.79px;font-size:10.5px;line-height:12.60px;font-weight:bold;color:#1a1a1a;transform:scaleX(0.893);transform-origin:50% 50%">Basis</div>
<div class="t" style="left:12.90px;top:11.61px;font-size:10.5px;line-height:12.60px;font-weight:bold;color:#1a1a1a;transform:scaleX(0.893);transform-origin:50% 50%">for</div>
<div class="t" style="left:0.06px;top:26.01px;font-size:10.5px;line-height:12.60px;font-weight:bold;color:#1a1a1a;transform:scaleX(0.893);transform-origin:50% 50%">Alternat</div>
<div class="t" style="left:12.02px;top:40.41px;font-size:10.5px;line-height:12.60px;font-weight:bold;color:#1a1a1a;transform:scaleX(0.893);transform-origin:50% 50%">e S</div>
</div>
<div class="t" style="left:604.16px;top:251.30px;width:18.68px;font-size:10.5px;line-height:12.60px;font-weight:bold;color:#1a1a1a;transform:rotate(-90deg) scaleX(0.893);transform-origin:50% 50%">Sex</div>
<div class="g" style="left:994.8px;top:233px;width:12.700000000000045px;height:49px"><div class="t" style="left:4.2px;top:11.32px;font-size:10.8px;line-height:12.96px;color:#1a1a1a;transform:scaleX(0.9);transform-origin:0 50%">Fa</div></div>
<div style="left:142.8px;top:268.8px;width:12.4px;height:13px;box-sizing:border-box;border:1px solid #c4c4c4;background:linear-gradient(#ffffff,#ececec)"></div>
<svg style="left:146.0px;top:273.8px;" width="6" height="4" viewBox="0 0 6 4"><path d="M0.6 0.5 H5.4 L3 3.2 Z" fill="#555"/></svg>
<div style="left:206.1px;top:268.8px;width:12.4px;height:13px;box-sizing:border-box;border:1px solid #c4c4c4;background:linear-gradient(#ffffff,#ececec)"></div>
<svg style="left:209.3px;top:273.8px;" width="6" height="4" viewBox="0 0 6 4"><path d="M0.6 0.5 H5.4 L3 3.2 Z" fill="#555"/></svg>
<div style="left:307.2px;top:268.8px;width:12.4px;height:13px;box-sizing:border-box;border:1px solid #c4c4c4;background:linear-gradient(#ffffff,#ececec)"></div>
<svg style="left:310.4px;top:273.8px;" width="6" height="4" viewBox="0 0 6 4"><path d="M0.6 0.5 H5.4 L3 3.2 Z" fill="#555"/></svg>
<div style="left:349.8px;top:268.8px;width:12.4px;height:13px;box-sizing:border-box;border:1px solid #c4c4c4;background:linear-gradient(#ffffff,#ececec)"></div>
<svg style="left:353.0px;top:273.8px;" width="6" height="4" viewBox="0 0 6 4"><path d="M0.6 0.5 H5.4 L3 3.2 Z" fill="#555"/></svg>
<div style="left:389.6px;top:268.8px;width:12.4px;height:13px;box-sizing:border-box;border:1px solid #c4c4c4;background:linear-gradient(#ffffff,#ececec)"></div>
<svg style="left:392.8px;top:273.8px;" width="6" height="4" viewBox="0 0 6 4"><path d="M0.6 0.5 H5.4 L3 3.2 Z" fill="#555"/></svg>
<div style="left:504.8px;top:268.8px;width:12.4px;height:13px;box-sizing:border-box;border:1px solid #c4c4c4;background:linear-gradient(#ffffff,#ececec)"></div>
<svg style="left:508.0px;top:273.8px;" width="6" height="4" viewBox="0 0 6 4"><path d="M0.6 0.5 H5.4 L3 3.2 Z" fill="#555"/></svg>
<div style="left:587.0px;top:268.8px;width:12.4px;height:13px;box-sizing:border-box;border:1px solid #c4c4c4;background:linear-gradient(#ffffff,#ececec)"></div>
<svg style="left:590.2px;top:273.8px;" width="6" height="4" viewBox="0 0 6 4"><path d="M0.6 0.5 H5.4 L3 3.2 Z" fill="#555"/></svg>
<div style="left:613.6px;top:268.8px;width:12.4px;height:13px;box-sizing:border-box;border:1px solid #c4c4c4;background:linear-gradient(#ffffff,#ececec)"></div>
<svg style="left:616.8px;top:273.8px;" width="6" height="4" viewBox="0 0 6 4"><path d="M0.6 0.5 H5.4 L3 3.2 Z" fill="#555"/></svg>
<div style="left:660.6px;top:268.8px;width:12.4px;height:13px;box-sizing:border-box;border:1px solid #c4c4c4;background:linear-gradient(#ffffff,#ececec)"></div>
<svg style="left:663.8px;top:273.8px;" width="6" height="4" viewBox="0 0 6 4"><path d="M0.6 0.5 H5.4 L3 3.2 Z" fill="#555"/></svg>
<div style="left:707.8px;top:268.8px;width:12.4px;height:13px;box-sizing:border-box;border:1px solid #c4c4c4;background:linear-gradient(#ffffff,#ececec)"></div>
<svg style="left:711.0px;top:273.8px;" width="6" height="4" viewBox="0 0 6 4"><path d="M0.6 0.5 H5.4 L3 3.2 Z" fill="#555"/></svg>
<div style="left:754.8px;top:268.8px;width:12.4px;height:13px;box-sizing:border-box;border:1px solid #c4c4c4;background:linear-gradient(#ffffff,#ececec)"></div>
<svg style="left:758.0px;top:273.8px;" width="6" height="4" viewBox="0 0 6 4"><path d="M0.6 0.5 H5.4 L3 3.2 Z" fill="#555"/></svg>
<div style="left:836.8px;top:268.8px;width:12.4px;height:13px;box-sizing:border-box;border:1px solid #c4c4c4;background:linear-gradient(#ffffff,#ececec)"></div>
<svg style="left:840.0px;top:273.8px;" width="6" height="4" viewBox="0 0 6 4"><path d="M0.6 0.5 H5.4 L3 3.2 Z" fill="#555"/></svg>
<div style="left:873.4px;top:268.8px;width:12.4px;height:13px;box-sizing:border-box;border:1px solid #c4c4c4;background:linear-gradient(#ffffff,#ececec)"></div>
<svg style="left:876.6px;top:273.8px;" width="6" height="4" viewBox="0 0 6 4"><path d="M0.6 0.5 H5.4 L3 3.2 Z" fill="#555"/></svg>
<div style="left:981.6px;top:268.8px;width:12.4px;height:13px;box-sizing:border-box;border:1px solid #c4c4c4;background:linear-gradient(#ffffff,#ececec)"></div>
<svg style="left:984.8px;top:273.8px;" width="6" height="4" viewBox="0 0 6 4"><path d="M0.6 0.5 H5.4 L3 3.2 Z" fill="#555"/></svg>
<div style="left:23px;top:283.2px;width:827px;height:22.80000000000001px;background:#fff2cc;"></div>
<div style="left:850px;top:283.2px;width:157.5px;height:22.80000000000001px;background:#cfe2f3;"></div>
<div style="left:0px;top:305.8px;width:1007.5px;height:0.9px;background:#c9c9c9;"></div>
<div style="left:0px;top:282.8px;width:23px;height:0.8px;background:#d0d2d1;"></div>
<div class="t" style="left:8.39px;top:292.50px;font-size:11.20px;line-height:13.44px;color:#444;">2</div>
<div class="t" style="left:85.05px;top:290.20px;font-size:8.00px;line-height:9.60px;color:#5c5a32;">51</div>
<div class="t" style="left:643.79px;top:290.12px;font-size:7.80px;line-height:9.36px;color:#5c5a32;">141</div>
<div class="t" style="left:685.39px;top:288.12px;font-size:10.80px;line-height:12.96px;color:#222;">141a</div>
<div class="t" style="left:796.99px;top:288.12px;font-size:10.80px;line-height:12.96px;color:#222;">141b</div>
<div class="t" style="left:863.96px;top:290.12px;font-size:7.80px;line-height:9.36px;color:#4a4440;">41</div>
<div class="t" style="left:936.36px;top:290.12px;font-size:7.80px;line-height:9.36px;color:#4a4440;">51</div>
<div class="g" style="left:0;top:306.6px;width:1007.5px;height:252.20px">
<div style="left:23px;top:11.61px;width:984.5px;height:0.9px;background:#e6e6e6"></div>
<div style="left:155.55px;top:-1.75px;width:0.9px;height:13.86px;background:#e6e6e6"></div>
<div style="left:218.85px;top:-1.75px;width:0.9px;height:13.86px;background:#e6e6e6"></div>
<div style="left:319.95px;top:-1.75px;width:0.9px;height:13.86px;background:#e6e6e6"></div>
<div style="left:362.55px;top:-1.75px;width:0.9px;height:13.86px;background:#e6e6e6"></div>
<div style="left:402.35px;top:-1.75px;width:0.9px;height:13.86px;background:#e6e6e6"></div>
<div style="left:517.55px;top:-1.75px;width:0.9px;height:13.86px;background:#e6e6e6"></div>
<div style="left:599.75px;top:-1.75px;width:0.9px;height:13.86px;background:#e6e6e6"></div>
<div style="left:626.35px;top:-1.75px;width:0.9px;height:13.86px;background:#e6e6e6"></div>
<div style="left:673.35px;top:-1.75px;width:0.9px;height:13.86px;background:#e6e6e6"></div>
<div style="left:720.55px;top:-1.75px;width:0.9px;height:13.86px;background:#e6e6e6"></div>
<div style="left:767.55px;top:-1.75px;width:0.9px;height:13.86px;background:#e6e6e6"></div>
<div style="left:886.15px;top:-1.75px;width:0.9px;height:13.86px;background:#e6e6e6"></div>
<div style="left:994.35px;top:-1.75px;width:0.9px;height:13.86px;background:#e6e6e6"></div>
<div style="left:0;top:11.71px;width:22.4px;height:0.8px;background:#d0d2d1"></div>
<div class="t" style="left:2.16px;top:-0.34px;font-size:11.2px;line-height:13.44px;color:#444;">781</div>
<div class="t" style="left:78.86px;top:1.36px;font-size:8.7px;line-height:10.44px;color:#303030;">son 1</div>
<div class="t" style="left:180.88px;top:1.36px;font-size:8.7px;line-height:10.44px;color:#303030;">syn</div>
<div class="t" style="left:221.60px;top:-0.30px;font-size:10.8px;line-height:12.96px;color:#1c1c1c;">RINGEL</div>
<div class="t" style="left:520.80px;top:-0.30px;font-size:10.8px;line-height:12.96px;color:#1c1c1c;">Berl</div>
<div class="t" style="left:609.00px;top:-0.30px;font-size:10.8px;line-height:12.96px;color:#1c1c1c;">m</div>
<div class="t" style="left:641.84px;top:1.36px;font-size:8.7px;line-height:10.44px;color:#4d4226;">birth</div>
<div class="t" style="left:685.39px;top:-0.30px;font-size:10.8px;line-height:12.96px;color:#1c1c1c;">1926</div>
<div class="t" style="left:770.20px;top:-0.30px;font-size:10.8px;line-height:12.96px;color:#1c1c1c;">Dynów</div>
<div class="t" style="left:938.53px;top:1.36px;font-size:8.7px;line-height:10.44px;color:#303030;">y</div>
<div class="t" style="left:997.00px;top:-0.30px;font-size:10.8px;line-height:12.96px;color:#1c1c1c;">Le</div>
<div style="left:23px;top:25.48px;width:984.5px;height:0.9px;background:#e6e6e6"></div>
<div style="left:155.55px;top:12.11px;width:0.9px;height:13.86px;background:#e6e6e6"></div>
<div style="left:218.85px;top:12.11px;width:0.9px;height:13.86px;background:#e6e6e6"></div>
<div style="left:319.95px;top:12.11px;width:0.9px;height:13.86px;background:#e6e6e6"></div>
<div style="left:362.55px;top:12.11px;width:0.9px;height:13.86px;background:#e6e6e6"></div>
<div style="left:402.35px;top:12.11px;width:0.9px;height:13.86px;background:#e6e6e6"></div>
<div style="left:517.55px;top:12.11px;width:0.9px;height:13.86px;background:#e6e6e6"></div>
<div style="left:599.75px;top:12.11px;width:0.9px;height:13.86px;background:#e6e6e6"></div>
<div style="left:626.35px;top:12.11px;width:0.9px;height:13.86px;background:#e6e6e6"></div>
<div style="left:673.35px;top:12.11px;width:0.9px;height:13.86px;background:#e6e6e6"></div>
<div style="left:720.55px;top:12.11px;width:0.9px;height:13.86px;background:#e6e6e6"></div>
<div style="left:767.55px;top:12.11px;width:0.9px;height:13.86px;background:#e6e6e6"></div>
<div style="left:886.15px;top:12.11px;width:0.9px;height:13.86px;background:#e6e6e6"></div>
<div style="left:994.35px;top:12.11px;width:0.9px;height:13.86px;background:#e6e6e6"></div>
<div style="left:0;top:25.58px;width:22.4px;height:0.8px;background:#d0d2d1"></div>
<div class="t" style="left:2.16px;top:13.53px;font-size:11.2px;line-height:13.44px;color:#444;">782</div>
<div class="t" style="left:78.86px;top:15.23px;font-size:8.7px;line-height:10.44px;color:#303030;">son 2</div>
<div class="t" style="left:180.88px;top:15.23px;font-size:8.7px;line-height:10.44px;color:#303030;">syn</div>
<div class="t" style="left:221.60px;top:13.57px;font-size:10.8px;line-height:12.96px;color:#1c1c1c;">RINGEL</div>
<div class="t" style="left:520.80px;top:13.57px;font-size:10.8px;line-height:12.96px;color:#1c1c1c;">Elische</div>
<div class="t" style="left:609.00px;top:13.57px;font-size:10.8px;line-height:12.96px;color:#1c1c1c;">m</div>
<div class="t" style="left:641.84px;top:15.23px;font-size:8.7px;line-height:10.44px;color:#4d4226;">birth</div>
<div class="t" style="left:685.39px;top:13.57px;font-size:10.8px;line-height:12.96px;color:#1c1c1c;">1928</div>
<div class="t" style="left:770.20px;top:13.57px;font-size:10.8px;line-height:12.96px;color:#1c1c1c;">Dynów</div>
<div class="t" style="left:938.53px;top:15.23px;font-size:8.7px;line-height:10.44px;color:#303030;">y</div>
<div class="t" style="left:997.00px;top:13.57px;font-size:10.8px;line-height:12.96px;color:#1c1c1c;">Le</div>
<div style="left:23px;top:39.34px;width:984.5px;height:0.9px;background:#e6e6e6"></div>
<div style="left:155.55px;top:25.98px;width:0.9px;height:13.86px;background:#e6e6e6"></div>
<div style="left:218.85px;top:25.98px;width:0.9px;height:13.86px;background:#e6e6e6"></div>
<div style="left:319.95px;top:25.98px;width:0.9px;height:13.86px;background:#e6e6e6"></div>
<div style="left:362.55px;top:25.98px;width:0.9px;height:13.86px;background:#e6e6e6"></div>
<div style="left:402.35px;top:25.98px;width:0.9px;height:13.86px;background:#e6e6e6"></div>
<div style="left:517.55px;top:25.98px;width:0.9px;height:13.86px;background:#e6e6e6"></div>
<div style="left:599.75px;top:25.98px;width:0.9px;height:13.86px;background:#e6e6e6"></div>
<div style="left:626.35px;top:25.98px;width:0.9px;height:13.86px;background:#e6e6e6"></div>
<div style="left:673.35px;top:25.98px;width:0.9px;height:13.86px;background:#e6e6e6"></div>
<div style="left:720.55px;top:25.98px;width:0.9px;height:13.86px;background:#e6e6e6"></div>
<div style="left:767.55px;top:25.98px;width:0.9px;height:13.86px;background:#e6e6e6"></div>
<div style="left:886.15px;top:25.98px;width:0.9px;height:13.86px;background:#e6e6e6"></div>
<div style="left:994.35px;top:25.98px;width:0.9px;height:13.86px;background:#e6e6e6"></div>
<div style="left:0;top:39.44px;width:22.4px;height:0.8px;background:#d0d2d1"></div>
<div class="t" style="left:2.16px;top:27.39px;font-size:11.2px;line-height:13.44px;color:#444;">783</div>
<div class="t" style="left:68.70px;top:29.09px;font-size:8.7px;line-height:10.44px;color:#303030;">daughter 1</div>
<div class="t" style="left:177.01px;top:29.09px;font-size:8.7px;line-height:10.44px;color:#303030;">córka</div>
<div class="t" style="left:221.60px;top:27.43px;font-size:10.8px;line-height:12.96px;color:#1c1c1c;">RINGEL</div>
<div class="t" style="left:520.80px;top:27.43px;font-size:10.8px;line-height:12.96px;color:#1c1c1c;">Chana</div>
<div class="t" style="left:612.00px;top:27.43px;font-size:10.8px;line-height:12.96px;color:#1c1c1c;">f</div>
<div class="t" style="left:641.84px;top:29.09px;font-size:8.7px;line-height:10.44px;color:#4d4226;">birth</div>
<div class="t" style="left:685.39px;top:27.43px;font-size:10.8px;line-height:12.96px;color:#1c1c1c;">1925</div>
<div class="t" style="left:770.20px;top:27.43px;font-size:10.8px;line-height:12.96px;color:#1c1c1c;">Dynów</div>
<div class="t" style="left:938.53px;top:29.09px;font-size:8.7px;line-height:10.44px;color:#303030;">y</div>
<div class="t" style="left:997.00px;top:27.43px;font-size:10.8px;line-height:12.96px;color:#1c1c1c;">Le</div>
<div style="left:23px;top:39.84px;width:984.5px;height:13.86px;background:#92d050"></div>
<div style="left:0;top:53.31px;width:22.4px;height:0.8px;background:#d0d2d1"></div>
<div class="t" style="left:2.16px;top:41.25px;font-size:11.2px;line-height:13.44px;color:#444;">784</div>
<div class="t" style="left:53.70px;top:42.95px;font-size:8.7px;line-height:10.44px;color:#33401f;">head of household</div>
<div class="t" style="left:179.43px;top:42.95px;font-size:8.7px;line-height:10.44px;color:#33401f;">mąż</div>
<div class="t" style="left:221.60px;top:41.29px;font-size:10.8px;line-height:12.96px;color:#1c1c1c;">FEUEREISEN</div>
<div class="t" style="left:520.80px;top:41.29px;font-size:10.8px;line-height:12.96px;color:#1c1c1c;">Chaim Szymon</div>
<div class="t" style="left:609.00px;top:41.29px;font-size:10.8px;line-height:12.96px;color:#1c1c1c;">m</div>
<div class="t" style="left:641.84px;top:42.95px;font-size:8.7px;line-height:10.44px;color:#4d4226;">birth</div>
<div class="t" style="left:685.39px;top:41.29px;font-size:10.8px;line-height:12.96px;color:#1c1c1c;">1886</div>
<div class="t" style="left:770.20px;top:41.29px;font-size:10.8px;line-height:12.96px;color:#1c1c1c;width:78.80px;overflow:hidden;">Bartfeld - Czech</div>
<div class="t" style="left:865.90px;top:42.41px;font-size:9.6px;line-height:11.52px;color:#4f4a38;font-family:'Liberation Serif',serif;">5</div>
<div class="t" style="left:929.58px;top:42.95px;font-size:8.7px;line-height:10.44px;color:#33401f;">father</div>
<div class="t" style="left:997.00px;top:41.29px;font-size:10.8px;line-height:12.96px;color:#1c1c1c;">Mo</div>
<div style="left:23px;top:67.07px;width:984.5px;height:0.9px;background:#e6e6e6"></div>
<div style="left:155.55px;top:53.71px;width:0.9px;height:13.86px;background:#e6e6e6"></div>
<div style="left:218.85px;top:53.71px;width:0.9px;height:13.86px;background:#e6e6e6"></div>
<div style="left:319.95px;top:53.71px;width:0.9px;height:13.86px;background:#e6e6e6"></div>
<div style="left:362.55px;top:53.71px;width:0.9px;height:13.86px;background:#e6e6e6"></div>
<div style="left:402.35px;top:53.71px;width:0.9px;height:13.86px;background:#e6e6e6"></div>
<div style="left:517.55px;top:53.71px;width:0.9px;height:13.86px;background:#e6e6e6"></div>
<div style="left:599.75px;top:53.71px;width:0.9px;height:13.86px;background:#e6e6e6"></div>
<div style="left:626.35px;top:53.71px;width:0.9px;height:13.86px;background:#e6e6e6"></div>
<div style="left:673.35px;top:53.71px;width:0.9px;height:13.86px;background:#e6e6e6"></div>
<div style="left:720.55px;top:53.71px;width:0.9px;height:13.86px;background:#e6e6e6"></div>
<div style="left:767.55px;top:53.71px;width:0.9px;height:13.86px;background:#e6e6e6"></div>
<div style="left:886.15px;top:53.71px;width:0.9px;height:13.86px;background:#e6e6e6"></div>
<div style="left:994.35px;top:53.71px;width:0.9px;height:13.86px;background:#e6e6e6"></div>
<div style="left:0;top:67.17px;width:22.4px;height:0.8px;background:#d0d2d1"></div>
<div class="t" style="left:2.16px;top:55.12px;font-size:11.2px;line-height:13.44px;color:#444;">785</div>
<div class="t" style="left:66.53px;top:56.82px;font-size:8.7px;line-height:10.44px;color:#303030;">second wife</div>
<div class="t" style="left:178.22px;top:56.82px;font-size:8.7px;line-height:10.44px;color:#303030;">żona</div>
<div class="t" style="left:221.60px;top:55.16px;font-size:10.8px;line-height:12.96px;color:#1c1c1c;">KARP</div>
<div class="t" style="left:405.10px;top:55.16px;font-size:10.8px;line-height:12.96px;color:#1c1c1c;">ROSENBERG</div>
<div class="t" style="left:520.80px;top:55.16px;font-size:10.8px;line-height:12.96px;color:#1c1c1c;">Ruchla</div>
<div class="t" style="left:612.00px;top:55.16px;font-size:10.8px;line-height:12.96px;color:#1c1c1c;">f</div>
<div class="t" style="left:641.84px;top:56.82px;font-size:8.7px;line-height:10.44px;color:#4d4226;">birth</div>
<div class="t" style="left:685.39px;top:55.16px;font-size:10.8px;line-height:12.96px;color:#1c1c1c;">1890</div>
<div class="t" style="left:770.20px;top:55.16px;font-size:10.8px;line-height:12.96px;color:#1c1c1c;width:78.80px;overflow:hidden;">Dynów</div>
<div class="t" style="left:865.90px;top:56.28px;font-size:9.6px;line-height:11.52px;color:#4f4a38;font-family:'Liberation Serif',serif;">7</div>
<div class="t" style="left:917.63px;top:56.82px;font-size:8.7px;line-height:10.44px;color:#303030;">wife&#x27;s father</div>
<div class="t" style="left:997.00px;top:55.16px;font-size:10.8px;line-height:12.96px;color:#1c1c1c;">Ja</div>
<div style="left:23px;top:80.93px;width:984.5px;height:0.9px;background:#e6e6e6"></div>
<div style="left:155.55px;top:67.57px;width:0.9px;height:13.86px;background:#e6e6e6"></div>
<div style="left:218.85px;top:67.57px;width:0.9px;height:13.86px;background:#e6e6e6"></div>
<div style="left:319.95px;top:67.57px;width:0.9px;height:13.86px;background:#e6e6e6"></div>
<div style="left:362.55px;top:67.57px;width:0.9px;height:13.86px;background:#e6e6e6"></div>
<div style="left:402.35px;top:67.57px;width:0.9px;height:13.86px;background:#e6e6e6"></div>
<div style="left:517.55px;top:67.57px;width:0.9px;height:13.86px;background:#e6e6e6"></div>
<div style="left:599.75px;top:67.57px;width:0.9px;height:13.86px;background:#e6e6e6"></div>
<div style="left:626.35px;top:67.57px;width:0.9px;height:13.86px;background:#e6e6e6"></div>
<div style="left:673.35px;top:67.57px;width:0.9px;height:13.86px;background:#e6e6e6"></div>
<div style="left:720.55px;top:67.57px;width:0.9px;height:13.86px;background:#e6e6e6"></div>
<div style="left:767.55px;top:67.57px;width:0.9px;height:13.86px;background:#e6e6e6"></div>
<div style="left:886.15px;top:67.57px;width:0.9px;height:13.86px;background:#e6e6e6"></div>
<div style="left:994.35px;top:67.57px;width:0.9px;height:13.86px;background:#e6e6e6"></div>
<div style="left:0;top:67.57px;width:22.4px;height:13.86px;background:#dedfde"></div>
<div style="left:0;top:81.03px;width:22.4px;height:0.8px;background:#d0d2d1"></div>
<div class="t" style="left:2.16px;top:68.98px;font-size:11.2px;line-height:13.44px;color:#1e7b3e;">786</div>
<div class="t" style="left:45.14px;top:70.68px;font-size:8.7px;line-height:10.44px;color:#303030;">second wife&#x27;s daughter</div>
<div class="t" style="left:177.01px;top:70.68px;font-size:8.7px;line-height:10.44px;color:#ff3b4e;">córka</div>
<div class="t" style="left:221.60px;top:69.02px;font-size:10.8px;line-height:12.96px;color:#1c1c1c;">KARP</div>
<div class="t" style="left:520.80px;top:69.02px;font-size:10.8px;line-height:12.96px;color:#1c1c1c;">Sara Perla</div>
<div class="t" style="left:612.00px;top:69.02px;font-size:10.8px;line-height:12.96px;color:#1c1c1c;">f</div>
<div class="t" style="left:641.84px;top:70.68px;font-size:8.7px;line-height:10.44px;color:#4d4226;">birth</div>
<div class="t" style="left:685.39px;top:69.02px;font-size:10.8px;line-height:12.96px;color:#1c1c1c;">1913</div>
<div class="t" style="left:770.20px;top:69.02px;font-size:10.8px;line-height:12.96px;color:#1c1c1c;width:78.80px;overflow:hidden;">Dynów</div>
<div class="t" style="left:865.90px;top:70.14px;font-size:9.6px;line-height:11.52px;color:#4f4a38;font-family:'Liberation Serif',serif;">9</div>
<div class="t" style="left:888.61px;top:70.68px;font-size:8.7px;line-height:10.44px;color:#303030;">second wife&#x27;s first husband</div>
<div class="t" style="left:997.00px;top:69.02px;font-size:10.8px;line-height:12.96px;color:#1c1c1c;">Ab</div>
<div style="left:23px;top:94.80px;width:984.5px;height:0.9px;background:#e6e6e6"></div>
<div style="left:155.55px;top:81.43px;width:0.9px;height:13.86px;background:#e6e6e6"></div>
<div style="left:218.85px;top:81.43px;width:0.9px;height:13.86px;background:#e6e6e6"></div>
<div style="left:319.95px;top:81.43px;width:0.9px;height:13.86px;background:#e6e6e6"></div>
<div style="left:362.55px;top:81.43px;width:0.9px;height:13.86px;background:#e6e6e6"></div>
<div style="left:402.35px;top:81.43px;width:0.9px;height:13.86px;background:#e6e6e6"></div>
<div style="left:517.55px;top:81.43px;width:0.9px;height:13.86px;background:#e6e6e6"></div>
<div style="left:599.75px;top:81.43px;width:0.9px;height:13.86px;background:#e6e6e6"></div>
<div style="left:626.35px;top:81.43px;width:0.9px;height:13.86px;background:#e6e6e6"></div>
<div style="left:673.35px;top:81.43px;width:0.9px;height:13.86px;background:#e6e6e6"></div>
<div style="left:720.55px;top:81.43px;width:0.9px;height:13.86px;background:#e6e6e6"></div>
<div style="left:767.55px;top:81.43px;width:0.9px;height:13.86px;background:#e6e6e6"></div>
<div style="left:886.15px;top:81.43px;width:0.9px;height:13.86px;background:#e6e6e6"></div>
<div style="left:994.35px;top:81.43px;width:0.9px;height:13.86px;background:#e6e6e6"></div>
<div style="left:0;top:94.90px;width:22.4px;height:0.8px;background:#d0d2d1"></div>
<div class="t" style="left:2.16px;top:82.85px;font-size:11.2px;line-height:13.44px;color:#444;">787</div>
<div class="t" style="left:62.32px;top:84.55px;font-size:8.7px;line-height:10.44px;color:#303030;">first wife&#x27;s son</div>
<div class="t" style="left:180.88px;top:84.55px;font-size:8.7px;line-height:10.44px;color:#303030;">syn</div>
<div class="t" style="left:221.60px;top:82.89px;font-size:10.8px;line-height:12.96px;color:#1c1c1c;">FEUEREISEN</div>
<div class="t" style="left:520.80px;top:82.89px;font-size:10.8px;line-height:12.96px;color:#1c1c1c;">Hersch Michael</div>
<div class="t" style="left:609.00px;top:82.89px;font-size:10.8px;line-height:12.96px;color:#1c1c1c;">m</div>
<div class="t" style="left:641.84px;top:84.55px;font-size:8.7px;line-height:10.44px;color:#4d4226;">birth</div>
<div class="t" style="left:685.39px;top:82.89px;font-size:10.8px;line-height:12.96px;color:#1c1c1c;">1919</div>
<div class="t" style="left:770.20px;top:82.89px;font-size:10.8px;line-height:12.96px;color:#1c1c1c;">Dukla</div>
<div class="t" style="left:938.53px;top:84.55px;font-size:8.7px;line-height:10.44px;color:#303030;">y</div>
<div class="t" style="left:997.00px;top:82.89px;font-size:10.8px;line-height:12.96px;color:#1c1c1c;">Ch</div>
<div style="left:23px;top:95.30px;width:984.5px;height:13.86px;background:#92d050"></div>
<div style="left:0;top:108.76px;width:22.4px;height:0.8px;background:#d0d2d1"></div>
<div class="t" style="left:2.16px;top:96.71px;font-size:11.2px;line-height:13.44px;color:#444;">788</div>
<div class="t" style="left:53.70px;top:98.41px;font-size:8.7px;line-height:10.44px;color:#33401f;">head of household</div>
<div class="t" style="left:179.43px;top:98.41px;font-size:8.7px;line-height:10.44px;color:#33401f;">mąż</div>
<div class="t" style="left:221.60px;top:96.75px;font-size:10.8px;line-height:12.96px;color:#1c1c1c;">SILBER</div>
<div class="t" style="left:520.80px;top:96.75px;font-size:10.8px;line-height:12.96px;color:#1c1c1c;">Lemel</div>
<div class="t" style="left:609.00px;top:96.75px;font-size:10.8px;line-height:12.96px;color:#1c1c1c;">m</div>
<div class="t" style="left:641.84px;top:98.41px;font-size:8.7px;line-height:10.44px;color:#4d4226;">birth</div>
<div class="t" style="left:685.39px;top:96.75px;font-size:10.8px;line-height:12.96px;color:#1c1c1c;">1891</div>
<div class="t" style="left:770.20px;top:96.75px;font-size:10.8px;line-height:12.96px;color:#1c1c1c;width:78.80px;overflow:hidden;">Wara ad Brzozów</div>
<div class="t" style="left:865.90px;top:97.87px;font-size:9.6px;line-height:11.52px;color:#4f4a38;font-family:'Liberation Serif',serif;">7</div>
<div class="t" style="left:929.58px;top:98.41px;font-size:8.7px;line-height:10.44px;color:#33401f;">father</div>
<div class="t" style="left:997.00px;top:96.75px;font-size:10.8px;line-height:12.96px;color:#1c1c1c;">Ma</div>
<div style="left:23px;top:122.53px;width:984.5px;height:0.9px;background:#e6e6e6"></div>
<div style="left:155.55px;top:109.16px;width:0.9px;height:13.86px;background:#e6e6e6"></div>
<div style="left:218.85px;top:109.16px;width:0.9px;height:13.86px;background:#e6e6e6"></div>
<div style="left:319.95px;top:109.16px;width:0.9px;height:13.86px;background:#e6e6e6"></div>
<div style="left:362.55px;top:109.16px;width:0.9px;height:13.86px;background:#e6e6e6"></div>
<div style="left:402.35px;top:109.16px;width:0.9px;height:13.86px;background:#e6e6e6"></div>
<div style="left:517.55px;top:109.16px;width:0.9px;height:13.86px;background:#e6e6e6"></div>
<div style="left:599.75px;top:109.16px;width:0.9px;height:13.86px;background:#e6e6e6"></div>
<div style="left:626.35px;top:109.16px;width:0.9px;height:13.86px;background:#e6e6e6"></div>
<div style="left:673.35px;top:109.16px;width:0.9px;height:13.86px;background:#e6e6e6"></div>
<div style="left:720.55px;top:109.16px;width:0.9px;height:13.86px;background:#e6e6e6"></div>
<div style="left:767.55px;top:109.16px;width:0.9px;height:13.86px;background:#e6e6e6"></div>
<div style="left:886.15px;top:109.16px;width:0.9px;height:13.86px;background:#e6e6e6"></div>
<div style="left:994.35px;top:109.16px;width:0.9px;height:13.86px;background:#e6e6e6"></div>
<div style="left:0;top:122.63px;width:22.4px;height:0.8px;background:#d0d2d1"></div>
<div class="t" style="left:2.16px;top:110.57px;font-size:11.2px;line-height:13.44px;color:#444;">789</div>
<div class="t" style="left:81.76px;top:112.27px;font-size:8.7px;line-height:10.44px;color:#303030;">wife</div>
<div class="t" style="left:178.22px;top:112.27px;font-size:8.7px;line-height:10.44px;color:#303030;">żona</div>
<div class="t" style="left:221.60px;top:110.61px;font-size:10.8px;line-height:12.96px;color:#1c1c1c;">SILBER</div>
<div class="t" style="left:405.10px;top:110.61px;font-size:10.8px;line-height:12.96px;color:#1c1c1c;">KASSER</div>
<div class="t" style="left:520.80px;top:110.61px;font-size:10.8px;line-height:12.96px;color:#1c1c1c;">Bruche</div>
<div class="t" style="left:612.00px;top:110.61px;font-size:10.8px;line-height:12.96px;color:#1c1c1c;">f</div>
<div class="t" style="left:641.84px;top:112.27px;font-size:8.7px;line-height:10.44px;color:#4d4226;">birth</div>
<div class="t" style="left:685.39px;top:110.61px;font-size:10.8px;line-height:12.96px;color:#1c1c1c;">1893</div>
<div class="t" style="left:770.20px;top:110.61px;font-size:10.8px;line-height:12.96px;color:#1c1c1c;width:78.80px;overflow:hidden;">Dynów</div>
<div class="t" style="left:865.90px;top:111.73px;font-size:9.6px;line-height:11.52px;color:#4f4a38;font-family:'Liberation Serif',serif;">9</div>
<div class="t" style="left:917.63px;top:112.27px;font-size:8.7px;line-height:10.44px;color:#303030;">wife&#x27;s father</div>
<div class="t" style="left:997.00px;top:110.61px;font-size:10.8px;line-height:12.96px;color:#1c1c1c;">Le</div>
<div style="left:23px;top:136.39px;width:984.5px;height:0.9px;background:#e6e6e6"></div>
<div style="left:155.55px;top:123.03px;width:0.9px;height:13.86px;background:#e6e6e6"></div>
<div style="left:218.85px;top:123.03px;width:0.9px;height:13.86px;background:#e6e6e6"></div>
<div style="left:319.95px;top:123.03px;width:0.9px;height:13.86px;background:#e6e6e6"></div>
<div style="left:362.55px;top:123.03px;width:0.9px;height:13.86px;background:#e6e6e6"></div>
<div style="left:402.35px;top:123.03px;width:0.9px;height:13.86px;background:#e6e6e6"></div>
<div style="left:517.55px;top:123.03px;width:0.9px;height:13.86px;background:#e6e6e6"></div>
<div style="left:599.75px;top:123.03px;width:0.9px;height:13.86px;background:#e6e6e6"></div>
<div style="left:626.35px;top:123.03px;width:0.9px;height:13.86px;background:#e6e6e6"></div>
<div style="left:673.35px;top:123.03px;width:0.9px;height:13.86px;background:#e6e6e6"></div>
<div style="left:720.55px;top:123.03px;width:0.9px;height:13.86px;background:#e6e6e6"></div>
<div style="left:767.55px;top:123.03px;width:0.9px;height:13.86px;background:#e6e6e6"></div>
<div style="left:886.15px;top:123.03px;width:0.9px;height:13.86px;background:#e6e6e6"></div>
<div style="left:994.35px;top:123.03px;width:0.9px;height:13.86px;background:#e6e6e6"></div>
<div style="left:0;top:136.49px;width:22.4px;height:0.8px;background:#d0d2d1"></div>
<div class="t" style="left:2.16px;top:124.44px;font-size:11.2px;line-height:13.44px;color:#444;">790</div>
<div class="t" style="left:68.70px;top:126.14px;font-size:8.7px;line-height:10.44px;color:#303030;">daughter 1</div>
<div class="t" style="left:177.01px;top:126.14px;font-size:8.7px;line-height:10.44px;color:#303030;">córka</div>
<div class="t" style="left:221.60px;top:124.48px;font-size:10.8px;line-height:12.96px;color:#1c1c1c;">SILBER</div>
<div class="t" style="left:520.80px;top:124.48px;font-size:10.8px;line-height:12.96px;color:#1c1c1c;">Gołda Chana</div>
<div class="t" style="left:612.00px;top:124.48px;font-size:10.8px;line-height:12.96px;color:#1c1c1c;">f</div>
<div class="t" style="left:641.84px;top:126.14px;font-size:8.7px;line-height:10.44px;color:#4d4226;">birth</div>
<div class="t" style="left:685.39px;top:124.48px;font-size:10.8px;line-height:12.96px;color:#1c1c1c;">1917</div>
<div class="t" style="left:770.20px;top:124.48px;font-size:10.8px;line-height:12.96px;color:#1c1c1c;">Dynów</div>
<div class="t" style="left:938.53px;top:126.14px;font-size:8.7px;line-height:10.44px;color:#303030;">y</div>
<div class="t" style="left:997.00px;top:124.48px;font-size:10.8px;line-height:12.96px;color:#1c1c1c;">Le</div>
<div style="left:23px;top:150.25px;width:984.5px;height:0.9px;background:#e6e6e6"></div>
<div style="left:155.55px;top:136.89px;width:0.9px;height:13.86px;background:#e6e6e6"></div>
<div style="left:218.85px;top:136.89px;width:0.9px;height:13.86px;background:#e6e6e6"></div>
<div style="left:319.95px;top:136.89px;width:0.9px;height:13.86px;background:#e6e6e6"></div>
<div style="left:362.55px;top:136.89px;width:0.9px;height:13.86px;background:#e6e6e6"></div>
<div style="left:402.35px;top:136.89px;width:0.9px;height:13.86px;background:#e6e6e6"></div>
<div style="left:517.55px;top:136.89px;width:0.9px;height:13.86px;background:#e6e6e6"></div>
<div style="left:599.75px;top:136.89px;width:0.9px;height:13.86px;background:#e6e6e6"></div>
<div style="left:626.35px;top:136.89px;width:0.9px;height:13.86px;background:#e6e6e6"></div>
<div style="left:673.35px;top:136.89px;width:0.9px;height:13.86px;background:#e6e6e6"></div>
<div style="left:720.55px;top:136.89px;width:0.9px;height:13.86px;background:#e6e6e6"></div>
<div style="left:767.55px;top:136.89px;width:0.9px;height:13.86px;background:#e6e6e6"></div>
<div style="left:886.15px;top:136.89px;width:0.9px;height:13.86px;background:#e6e6e6"></div>
<div style="left:994.35px;top:136.89px;width:0.9px;height:13.86px;background:#e6e6e6"></div>
<div style="left:0;top:150.35px;width:22.4px;height:0.8px;background:#d0d2d1"></div>
<div class="t" style="left:2.16px;top:138.30px;font-size:11.2px;line-height:13.44px;color:#444;">791</div>
<div class="t" style="left:78.86px;top:140.00px;font-size:8.7px;line-height:10.44px;color:#303030;">son 1</div>
<div class="t" style="left:180.88px;top:140.00px;font-size:8.7px;line-height:10.44px;color:#303030;">syn</div>
<div class="t" style="left:221.60px;top:138.34px;font-size:10.8px;line-height:12.96px;color:#1c1c1c;">SILBER</div>
<div class="t" style="left:520.80px;top:138.34px;font-size:10.8px;line-height:12.96px;color:#1c1c1c;">Samuel</div>
<div class="t" style="left:609.00px;top:138.34px;font-size:10.8px;line-height:12.96px;color:#1c1c1c;">m</div>
<div class="t" style="left:641.84px;top:140.00px;font-size:8.7px;line-height:10.44px;color:#4d4226;">birth</div>
<div class="t" style="left:685.39px;top:138.34px;font-size:10.8px;line-height:12.96px;color:#1c1c1c;">1919</div>
<div class="t" style="left:770.20px;top:138.34px;font-size:10.8px;line-height:12.96px;color:#1c1c1c;">Dynów</div>
<div class="t" style="left:938.53px;top:140.00px;font-size:8.7px;line-height:10.44px;color:#303030;">y</div>
<div class="t" style="left:997.00px;top:138.34px;font-size:10.8px;line-height:12.96px;color:#1c1c1c;">Le</div>
<div style="left:23px;top:164.12px;width:984.5px;height:0.9px;background:#e6e6e6"></div>
<div style="left:155.55px;top:150.75px;width:0.9px;height:13.86px;background:#e6e6e6"></div>
<div style="left:218.85px;top:150.75px;width:0.9px;height:13.86px;background:#e6e6e6"></div>
<div style="left:319.95px;top:150.75px;width:0.9px;height:13.86px;background:#e6e6e6"></div>
<div style="left:362.55px;top:150.75px;width:0.9px;height:13.86px;background:#e6e6e6"></div>
<div style="left:402.35px;top:150.75px;width:0.9px;height:13.86px;background:#e6e6e6"></div>
<div style="left:517.55px;top:150.75px;width:0.9px;height:13.86px;background:#e6e6e6"></div>
<div style="left:599.75px;top:150.75px;width:0.9px;height:13.86px;background:#e6e6e6"></div>
<div style="left:626.35px;top:150.75px;width:0.9px;height:13.86px;background:#e6e6e6"></div>
<div style="left:673.35px;top:150.75px;width:0.9px;height:13.86px;background:#e6e6e6"></div>
<div style="left:720.55px;top:150.75px;width:0.9px;height:13.86px;background:#e6e6e6"></div>
<div style="left:767.55px;top:150.75px;width:0.9px;height:13.86px;background:#e6e6e6"></div>
<div style="left:886.15px;top:150.75px;width:0.9px;height:13.86px;background:#e6e6e6"></div>
<div style="left:994.35px;top:150.75px;width:0.9px;height:13.86px;background:#e6e6e6"></div>
<div style="left:0;top:164.22px;width:22.4px;height:0.8px;background:#d0d2d1"></div>
<div class="t" style="left:2.16px;top:152.17px;font-size:11.2px;line-height:13.44px;color:#444;">792</div>
<div class="t" style="left:68.70px;top:153.87px;font-size:8.7px;line-height:10.44px;color:#303030;">daughter 2</div>
<div class="t" style="left:177.01px;top:153.87px;font-size:8.7px;line-height:10.44px;color:#303030;">córka</div>
<div class="t" style="left:221.60px;top:152.21px;font-size:10.8px;line-height:12.96px;color:#1c1c1c;">SILBER</div>
<div class="t" style="left:520.80px;top:152.21px;font-size:10.8px;line-height:12.96px;color:#1c1c1c;">Estera</div>
<div class="t" style="left:612.00px;top:152.21px;font-size:10.8px;line-height:12.96px;color:#1c1c1c;">f</div>
<div class="t" style="left:641.84px;top:153.87px;font-size:8.7px;line-height:10.44px;color:#4d4226;">birth</div>
<div class="t" style="left:685.39px;top:152.21px;font-size:10.8px;line-height:12.96px;color:#1c1c1c;">1922</div>
<div class="t" style="left:770.20px;top:152.21px;font-size:10.8px;line-height:12.96px;color:#1c1c1c;">Dynów</div>
<div class="t" style="left:938.53px;top:153.87px;font-size:8.7px;line-height:10.44px;color:#303030;">y</div>
<div class="t" style="left:997.00px;top:152.21px;font-size:10.8px;line-height:12.96px;color:#1c1c1c;">Le</div>
<div style="left:23px;top:177.98px;width:984.5px;height:0.9px;background:#e6e6e6"></div>
<div style="left:155.55px;top:164.62px;width:0.9px;height:13.86px;background:#e6e6e6"></div>
<div style="left:218.85px;top:164.62px;width:0.9px;height:13.86px;background:#e6e6e6"></div>
<div style="left:319.95px;top:164.62px;width:0.9px;height:13.86px;background:#e6e6e6"></div>
<div style="left:362.55px;top:164.62px;width:0.9px;height:13.86px;background:#e6e6e6"></div>
<div style="left:402.35px;top:164.62px;width:0.9px;height:13.86px;background:#e6e6e6"></div>
<div style="left:517.55px;top:164.62px;width:0.9px;height:13.86px;background:#e6e6e6"></div>
<div style="left:599.75px;top:164.62px;width:0.9px;height:13.86px;background:#e6e6e6"></div>
<div style="left:626.35px;top:164.62px;width:0.9px;height:13.86px;background:#e6e6e6"></div>
<div style="left:673.35px;top:164.62px;width:0.9px;height:13.86px;background:#e6e6e6"></div>
<div style="left:720.55px;top:164.62px;width:0.9px;height:13.86px;background:#e6e6e6"></div>
<div style="left:767.55px;top:164.62px;width:0.9px;height:13.86px;background:#e6e6e6"></div>
<div style="left:886.15px;top:164.62px;width:0.9px;height:13.86px;background:#e6e6e6"></div>
<div style="left:994.35px;top:164.62px;width:0.9px;height:13.86px;background:#e6e6e6"></div>
<div style="left:0;top:178.08px;width:22.4px;height:0.8px;background:#d0d2d1"></div>
<div class="t" style="left:2.16px;top:166.03px;font-size:11.2px;line-height:13.44px;color:#444;">793</div>
<div class="t" style="left:68.70px;top:167.73px;font-size:8.7px;line-height:10.44px;color:#303030;">daughter 3</div>
<div class="t" style="left:177.01px;top:167.73px;font-size:8.7px;line-height:10.44px;color:#303030;">córka</div>
<div class="t" style="left:221.60px;top:166.07px;font-size:10.8px;line-height:12.96px;color:#1c1c1c;">SILBER</div>
<div class="t" style="left:520.80px;top:166.07px;font-size:10.8px;line-height:12.96px;color:#1c1c1c;">Chaja</div>
<div class="t" style="left:612.00px;top:166.07px;font-size:10.8px;line-height:12.96px;color:#1c1c1c;">f</div>
<div class="t" style="left:641.84px;top:167.73px;font-size:8.7px;line-height:10.44px;color:#4d4226;">birth</div>
<div class="t" style="left:685.39px;top:166.07px;font-size:10.8px;line-height:12.96px;color:#1c1c1c;">1929</div>
<div class="t" style="left:770.20px;top:166.07px;font-size:10.8px;line-height:12.96px;color:#1c1c1c;">Dynów</div>
<div class="t" style="left:938.53px;top:167.73px;font-size:8.7px;line-height:10.44px;color:#303030;">y</div>
<div class="t" style="left:997.00px;top:166.07px;font-size:10.8px;line-height:12.96px;color:#1c1c1c;">Le</div>
<div style="left:23px;top:178.48px;width:984.5px;height:13.86px;background:#92d050"></div>
<div style="left:0;top:191.95px;width:22.4px;height:0.8px;background:#d0d2d1"></div>
<div class="t" style="left:2.16px;top:179.89px;font-size:11.2px;line-height:13.44px;color:#444;">794</div>
<div class="t" style="left:53.70px;top:181.59px;font-size:8.7px;line-height:10.44px;color:#33401f;">head of household</div>
<div class="t" style="left:221.60px;top:179.93px;font-size:10.8px;line-height:12.96px;color:#1c1c1c;">FUSS</div>
<div class="t" style="left:520.80px;top:179.93px;font-size:10.8px;line-height:12.96px;color:#1c1c1c;">Juliusz</div>
<div class="t" style="left:609.00px;top:179.93px;font-size:10.8px;line-height:12.96px;color:#1c1c1c;">m</div>
<div class="t" style="left:641.84px;top:181.59px;font-size:8.7px;line-height:10.44px;color:#4d4226;">birth</div>
<div class="t" style="left:685.39px;top:179.93px;font-size:10.8px;line-height:12.96px;color:#1c1c1c;">1913</div>
<div class="t" style="left:770.20px;top:179.93px;font-size:10.8px;line-height:12.96px;color:#1c1c1c;width:78.80px;overflow:hidden;">Kraków</div>
<div class="t" style="left:865.90px;top:181.05px;font-size:9.6px;line-height:11.52px;color:#4f4a38;font-family:'Liberation Serif',serif;">2</div>
<div class="t" style="left:929.58px;top:181.59px;font-size:8.7px;line-height:10.44px;color:#33401f;">father</div>
<div class="t" style="left:997.00px;top:179.93px;font-size:10.8px;line-height:12.96px;color:#1c1c1c;">Ja</div>
<div style="left:23px;top:192.35px;width:984.5px;height:13.86px;background:#92d050"></div>
<div style="left:0;top:205.81px;width:22.4px;height:0.8px;background:#d0d2d1"></div>
<div class="t" style="left:2.16px;top:193.76px;font-size:11.2px;line-height:13.44px;color:#444;">795</div>
<div class="t" style="left:53.70px;top:195.46px;font-size:8.7px;line-height:10.44px;color:#33401f;">head of household</div>
<div class="t" style="left:179.43px;top:195.46px;font-size:8.7px;line-height:10.44px;color:#33401f;">mąż</div>
<div class="t" style="left:221.60px;top:193.80px;font-size:10.8px;line-height:12.96px;color:#1c1c1c;">GRUENSPAN</div>
<div class="t" style="left:520.80px;top:193.80px;font-size:10.8px;line-height:12.96px;color:#1c1c1c;">Moses</div>
<div class="t" style="left:609.00px;top:193.80px;font-size:10.8px;line-height:12.96px;color:#1c1c1c;">m</div>
<div class="t" style="left:641.84px;top:195.46px;font-size:8.7px;line-height:10.44px;color:#4d4226;">birth</div>
<div class="t" style="left:685.39px;top:193.80px;font-size:10.8px;line-height:12.96px;color:#1c1c1c;">1885</div>
<div class="t" style="left:770.20px;top:193.80px;font-size:10.8px;line-height:12.96px;color:#1c1c1c;width:78.80px;overflow:hidden;">Jaśliska</div>
<div class="t" style="left:865.90px;top:194.92px;font-size:9.6px;line-height:11.52px;color:#4f4a38;font-family:'Liberation Serif',serif;">4</div>
<div class="t" style="left:929.58px;top:195.46px;font-size:8.7px;line-height:10.44px;color:#33401f;">father</div>
<div class="t" style="left:997.00px;top:193.80px;font-size:10.8px;line-height:12.96px;color:#1c1c1c;">Ch</div>
<div style="left:23px;top:219.57px;width:984.5px;height:0.9px;background:#e6e6e6"></div>
<div style="left:155.55px;top:206.21px;width:0.9px;height:13.86px;background:#e6e6e6"></div>
<div style="left:218.85px;top:206.21px;width:0.9px;height:13.86px;background:#e6e6e6"></div>
<div style="left:319.95px;top:206.21px;width:0.9px;height:13.86px;background:#e6e6e6"></div>
<div style="left:362.55px;top:206.21px;width:0.9px;height:13.86px;background:#e6e6e6"></div>
<div style="left:402.35px;top:206.21px;width:0.9px;height:13.86px;background:#e6e6e6"></div>
<div style="left:517.55px;top:206.21px;width:0.9px;height:13.86px;background:#e6e6e6"></div>
<div style="left:599.75px;top:206.21px;width:0.9px;height:13.86px;background:#e6e6e6"></div>
<div style="left:626.35px;top:206.21px;width:0.9px;height:13.86px;background:#e6e6e6"></div>
<div style="left:673.35px;top:206.21px;width:0.9px;height:13.86px;background:#e6e6e6"></div>
<div style="left:720.55px;top:206.21px;width:0.9px;height:13.86px;background:#e6e6e6"></div>
<div style="left:767.55px;top:206.21px;width:0.9px;height:13.86px;background:#e6e6e6"></div>
<div style="left:886.15px;top:206.21px;width:0.9px;height:13.86px;background:#e6e6e6"></div>
<div style="left:994.35px;top:206.21px;width:0.9px;height:13.86px;background:#e6e6e6"></div>
<div style="left:0;top:219.67px;width:22.4px;height:0.8px;background:#d0d2d1"></div>
<div class="t" style="left:2.16px;top:207.62px;font-size:11.2px;line-height:13.44px;color:#444;">796</div>
<div class="t" style="left:66.53px;top:209.32px;font-size:8.7px;line-height:10.44px;color:#303030;">second wife</div>
<div class="t" style="left:178.22px;top:209.32px;font-size:8.7px;line-height:10.44px;color:#303030;">żona</div>
<div class="t" style="left:221.60px;top:207.66px;font-size:10.8px;line-height:12.96px;color:#1c1c1c;">GRUENSPAN</div>
<div class="t" style="left:405.10px;top:207.66px;font-size:10.8px;line-height:12.96px;color:#1c1c1c;">MESS</div>
<div class="t" style="left:520.80px;top:207.66px;font-size:10.8px;line-height:12.96px;color:#1c1c1c;">Mariem</div>
<div class="t" style="left:612.00px;top:207.66px;font-size:10.8px;line-height:12.96px;color:#1c1c1c;">f</div>
<div class="t" style="left:641.84px;top:209.32px;font-size:8.7px;line-height:10.44px;color:#4d4226;">birth</div>
<div class="t" style="left:685.39px;top:207.66px;font-size:10.8px;line-height:12.96px;color:#1c1c1c;">1897</div>
<div class="t" style="left:770.20px;top:207.66px;font-size:10.8px;line-height:12.96px;color:#1c1c1c;width:78.80px;overflow:hidden;">Błażowa</div>
<div class="t" style="left:865.90px;top:208.78px;font-size:9.6px;line-height:11.52px;color:#4f4a38;font-family:'Liberation Serif',serif;">6</div>
<div class="t" style="left:902.39px;top:209.32px;font-size:8.7px;line-height:10.44px;color:#303030;">second wife&#x27;s father</div>
<div class="t" style="left:997.00px;top:207.66px;font-size:10.8px;line-height:12.96px;color:#1c1c1c;">Ma</div>
<div style="left:23px;top:233.44px;width:984.5px;height:0.9px;background:#e6e6e6"></div>
<div style="left:155.55px;top:220.07px;width:0.9px;height:13.86px;background:#e6e6e6"></div>
<div style="left:218.85px;top:220.07px;width:0.9px;height:13.86px;background:#e6e6e6"></div>
<div style="left:319.95px;top:220.07px;width:0.9px;height:13.86px;background:#e6e6e6"></div>
<div style="left:362.55px;top:220.07px;width:0.9px;height:13.86px;background:#e6e6e6"></div>
<div style="left:402.35px;top:220.07px;width:0.9px;height:13.86px;background:#e6e6e6"></div>
<div style="left:517.55px;top:220.07px;width:0.9px;height:13.86px;background:#e6e6e6"></div>
<div style="left:599.75px;top:220.07px;width:0.9px;height:13.86px;background:#e6e6e6"></div>
<div style="left:626.35px;top:220.07px;width:0.9px;height:13.86px;background:#e6e6e6"></div>
<div style="left:673.35px;top:220.07px;width:0.9px;height:13.86px;background:#e6e6e6"></div>
<div style="left:720.55px;top:220.07px;width:0.9px;height:13.86px;background:#e6e6e6"></div>
<div style="left:767.55px;top:220.07px;width:0.9px;height:13.86px;background:#e6e6e6"></div>
<div style="left:886.15px;top:220.07px;width:0.9px;height:13.86px;background:#e6e6e6"></div>
<div style="left:994.35px;top:220.07px;width:0.9px;height:13.86px;background:#e6e6e6"></div>
<div style="left:0;top:233.54px;width:22.4px;height:0.8px;background:#d0d2d1"></div>
<div class="t" style="left:2.16px;top:221.49px;font-size:11.2px;line-height:13.44px;color:#444;">797</div>
<div class="t" style="left:52.16px;top:223.19px;font-size:8.7px;line-height:10.44px;color:#303030;">first wife&#x27;s daughter</div>
<div class="t" style="left:177.01px;top:223.19px;font-size:8.7px;line-height:10.44px;color:#303030;">córka</div>
<div class="t" style="left:221.60px;top:221.53px;font-size:10.8px;line-height:12.96px;color:#1c1c1c;">GRUENSPAN</div>
<div class="t" style="left:520.80px;top:221.53px;font-size:10.8px;line-height:12.96px;color:#1c1c1c;">Mania</div>
<div class="t" style="left:612.00px;top:221.53px;font-size:10.8px;line-height:12.96px;color:#1c1c1c;">f</div>
<div class="t" style="left:641.84px;top:223.19px;font-size:8.7px;line-height:10.44px;color:#4d4226;">birth</div>
<div class="t" style="left:685.39px;top:221.53px;font-size:10.8px;line-height:12.96px;color:#1c1c1c;">1918</div>
<div class="t" style="left:770.20px;top:221.53px;font-size:10.8px;line-height:12.96px;color:#1c1c1c;">Dynów</div>
<div class="t" style="left:938.53px;top:223.19px;font-size:8.7px;line-height:10.44px;color:#303030;">y</div>
<div class="t" style="left:997.00px;top:221.53px;font-size:10.8px;line-height:12.96px;color:#1c1c1c;">Mo</div>
<div style="left:23px;top:233.94px;width:984.5px;height:13.86px;background:#92d050"></div>
<div style="left:0;top:247.40px;width:22.4px;height:0.8px;background:#d0d2d1"></div>
<div class="t" style="left:2.16px;top:235.35px;font-size:11.2px;line-height:13.44px;color:#444;">798</div>
<div class="t" style="left:53.70px;top:237.05px;font-size:8.7px;line-height:10.44px;color:#33401f;">head of household</div>
<div class="t" style="left:176.53px;top:237.05px;font-size:8.7px;line-height:10.44px;color:#33401f;">ojciec</div>
<div class="t" style="left:221.60px;top:235.39px;font-size:10.8px;line-height:12.96px;color:#1c1c1c;">RINGEL</div>
<div class="t" style="left:520.80px;top:235.39px;font-size:10.8px;line-height:12.96px;color:#1c1c1c;">Suesche</div>
<div class="t" style="left:609.00px;top:235.39px;font-size:10.8px;line-height:12.96px;color:#1c1c1c;">m</div>
<div class="t" style="left:641.84px;top:237.05px;font-size:8.7px;line-height:10.44px;color:#4d4226;">birth</div>
<div class="t" style="left:685.39px;top:235.39px;font-size:10.8px;line-height:12.96px;color:#1c1c1c;">1882</div>
<div class="t" style="left:770.20px;top:235.39px;font-size:10.8px;line-height:12.96px;color:#1c1c1c;width:78.80px;overflow:hidden;">Dynów</div>
<div class="t" style="left:865.90px;top:236.51px;font-size:9.6px;line-height:11.52px;color:#4f4a38;font-family:'Liberation Serif',serif;">8</div>
<div class="t" style="left:929.58px;top:237.05px;font-size:8.7px;line-height:10.44px;color:#33401f;">father</div>
<div class="t" style="left:997.00px;top:235.39px;font-size:10.8px;line-height:12.96px;color:#1c1c1c;">Mo</div>
<div style="left:23px;top:261.17px;width:984.5px;height:0.9px;background:#e6e6e6"></div>
<div style="left:155.55px;top:247.80px;width:0.9px;height:13.86px;background:#e6e6e6"></div>
<div style="left:218.85px;top:247.80px;width:0.9px;height:13.86px;background:#e6e6e6"></div>
<div style="left:319.95px;top:247.80px;width:0.9px;height:13.86px;background:#e6e6e6"></div>
<div style="left:362.55px;top:247.80px;width:0.9px;height:13.86px;background:#e6e6e6"></div>
<div style="left:402.35px;top:247.80px;width:0.9px;height:13.86px;background:#e6e6e6"></div>
<div style="left:517.55px;top:247.80px;width:0.9px;height:13.86px;background:#e6e6e6"></div>
<div style="left:599.75px;top:247.80px;width:0.9px;height:13.86px;background:#e6e6e6"></div>
<div style="left:626.35px;top:247.80px;width:0.9px;height:13.86px;background:#e6e6e6"></div>
<div style="left:673.35px;top:247.80px;width:0.9px;height:13.86px;background:#e6e6e6"></div>
<div style="left:720.55px;top:247.80px;width:0.9px;height:13.86px;background:#e6e6e6"></div>
<div style="left:767.55px;top:247.80px;width:0.9px;height:13.86px;background:#e6e6e6"></div>
<div style="left:886.15px;top:247.80px;width:0.9px;height:13.86px;background:#e6e6e6"></div>
<div style="left:994.35px;top:247.80px;width:0.9px;height:13.86px;background:#e6e6e6"></div>
<div style="left:0;top:261.27px;width:22.4px;height:0.8px;background:#d0d2d1"></div>
<div class="t" style="left:2.16px;top:249.21px;font-size:11.2px;line-height:13.44px;color:#444;">799</div>
<div class="t" style="left:78.86px;top:250.91px;font-size:8.7px;line-height:10.44px;color:#303030;">son 1</div>
<div class="t" style="left:180.88px;top:250.91px;font-size:8.7px;line-height:10.44px;color:#303030;">syn</div>
<div class="t" style="left:221.60px;top:249.25px;font-size:10.8px;line-height:12.96px;color:#1c1c1c;">RINGEL</div>
<div class="t" style="left:520.80px;top:249.25px;font-size:10.8px;line-height:12.96px;color:#1c1c1c;">Feiga</div>
<div class="t" style="left:612.00px;top:249.25px;font-size:10.8px;line-height:12.96px;color:#1c1c1c;">f</div>
<div class="t" style="left:641.84px;top:250.91px;font-size:8.7px;line-height:10.44px;color:#4d4226;">birth</div>
<div class="t" style="left:685.39px;top:249.25px;font-size:10.8px;line-height:12.96px;color:#1c1c1c;">1908</div>
<div class="t" style="left:770.20px;top:249.25px;font-size:10.8px;line-height:12.96px;color:#1c1c1c;">Krosno</div>
<div class="t" style="left:938.53px;top:250.91px;font-size:8.7px;line-height:10.44px;color:#303030;">y</div>
<div class="t" style="left:997.00px;top:249.25px;font-size:10.8px;line-height:12.96px;color:#1c1c1c;">Sa</div>
<div style="left:626.20px;top:0;width:1.1px;height:260px;background:#3c3c3c"></div>
<div style="left:849px;top:0;width:2.2px;height:260px;background:#0a0a0a"></div>
<div style="left:22.2px;top:66.67px;width:134.4px;height:15.16px;box-sizing:border-box;border:1.6px solid #1e7b3e"></div>
<div style="left:154.4px;top:79.23px;width:3px;height:3px;background:#1e7b3e;border:0.6px solid #fff"></div>
</div>
<div style="left:849px;top:233px;width:2.2px;height:73px;background:#0a0a0a;"></div>
<div style="left:626.1999999999999px;top:283px;width:1.1px;height:23px;background:#3c3c3c;"></div>
<div style="left:1008.5px;top:220px;width:15px;height:338px;background:#f4f7f5;border-radius:7px"></div>
<svg style="left:1011.5px;top:224.5px;" width="9" height="6" viewBox="0 0 9 6"><path d="M0.5 5.5 H8.5 L4.5 0.8 Z" fill="#6a6a6a"/></svg>
<svg style="left:1011.5px;top:549px;" width="9" height="6" viewBox="0 0 9 6"><path d="M0.5 0.5 H8.5 L4.5 5.2 Z" fill="#6a6a6a"/></svg>
<div style="left:1013.2px;top:385.3px;width:5.9px;height:14.4px;background:#6e6e6e;border-radius:3px"></div>
<div style="left:0px;top:558.8px;width:1024px;height:24.6px;background:#e4eae6;"></div>
<svg style="left:17.5px;top:566px;" width="7" height="10" viewBox="0 0 7 10"><path d="M4.8 1.2 L1.4 4.8 L4.8 8.4" fill="none" stroke="#333" stroke-width="1.05" stroke-linecap="round" stroke-linejoin="round"/></svg>
<svg style="left:43.5px;top:566px;" width="7" height="10" viewBox="0 0 7 10"><path d="M2 1.2 L5.4 4.8 L2 8.4" fill="none" stroke="#333" stroke-width="1.05" stroke-linecap="round" stroke-linejoin="round"/></svg>
<svg style="left:67.5px;top:569px;" width="10" height="4" viewBox="0 0 10 4"><circle cx="1.6" cy="1.8" r="1.05" fill="#333"/><circle cx="4.6" cy="1.8" r="1.05" fill="#333"/><circle cx="7.6" cy="1.8" r="1.05" fill="#333"/></svg>
<div style="left:88.3px;top:558.8px;width:42.2px;height:22px;background:#fdfefd;border-radius:0 0 4px 4px"></div>
<div class="t" style="left:95.10px;top:562.63px;font-size:12.28px;line-height:14.73px;color:#1b1b1b;transform:scaleX(0.9346);transform-origin:0 50%;-webkit-text-stroke:0.25px #1b1b1b;">DATA</div>
<div style="left:95.1px;top:577px;width:28.9px;height:1.9px;background:#1e7b3e;border-radius:1px"></div>
<div style="left:134.2px;top:563.5px;width:0.8px;height:15px;background:#d3d8d5;"></div>
<div class="t" style="left:145.50px;top:564.91px;font-size:11.64px;line-height:13.97px;color:#2b2b2b;transform:scaleX(0.9346);transform-origin:0 50%;">Source and Notes</div>
<div style="left:244px;top:563.5px;width:0.8px;height:15px;background:#d3d8d5;"></div>
<div class="t" style="left:253.50px;top:564.87px;font-size:11.72px;line-height:14.07px;color:#2b2b2b;transform:scaleX(0.9346);transform-origin:0 50%;">orig-Books of Residents_1931-19</div>
<div style="left:426.6px;top:563.5px;width:0.8px;height:15px;background:#d3d8d5;"></div>
<div class="g" style="left:429.8px;top:561.7px;width:123.4px;height:19px;background:#ff0000;border-radius:3.5px 0 0 3.5px">
<div class="t" style="left:8.8px;top:3.77px;font-size:10.71px;line-height:12.86px;color:#fff">Sample Pages from Regis</div>
</div>
<svg style="left:560.5px;top:568.6px;" width="10" height="4" viewBox="0 0 10 4"><circle cx="1.6" cy="1.8" r="1.05" fill="#333"/><circle cx="4.7" cy="1.8" r="1.05" fill="#333"/><circle cx="7.8" cy="1.8" r="1.05" fill="#333"/></svg>
<svg style="left:586.5px;top:565.8px;" width="10" height="10" viewBox="0 0 10 10"><path d="M4.8 0.8 V8.8 M0.8 4.8 H8.8" stroke="#333" stroke-width="1.05" stroke-linecap="round"/></svg>
<svg style="left:615px;top:565.5px;" width="4" height="11" viewBox="0 0 4 11"><circle cx="1.8" cy="1.6" r="0.85" fill="#333"/><circle cx="1.8" cy="5" r="0.85" fill="#333"/><circle cx="1.8" cy="8.4" r="0.85" fill="#333"/></svg>
<div style="left:630.3px;top:564px;width:377.2px;height:13.4px;background:#f5f8f6;border-radius:6.7px"></div>
<svg style="left:634px;top:567px;" width="6" height="8" viewBox="0 0 6 8"><path d="M5.2 0.5 V7.1 L0.8 3.8 Z" fill="#5d5d5d"/></svg>
<svg style="left:997.5px;top:567px;" width="6" height="8" viewBox="0 0 6 8"><path d="M0.8 0.5 V7.1 L5.2 3.8 Z" fill="#5d5d5d"/></svg>
<div style="left:680.1px;top:567.2px;width:83px;height:6.6px;background:#6e6e6e;border-radius:3.3px"></div>
<div style="left:0px;top:583.3px;width:1024px;height:18.6px;background:#f4f5f4;"></div>
<div class="t" style="left:9.40px;top:588.54px;font-size:8.11px;line-height:9.73px;color:#555;transform:scaleX(0.9346);transform-origin:0 50%;">Ready</div>
<svg style="left:46.5px;top:587.5px;" width="12" height="12" viewBox="0 0 12 12"><circle cx="5.6" cy="1.8" r="1.2" fill="none" stroke="#333" stroke-width="0.8"/><path d="M1 3.6 L4.2 4.6 H7 L10.2 3.6 M4.2 4.6 V7 L2.6 10.6 M7 4.6 V7 L8 8.2" fill="none" stroke="#333" stroke-width="0.85" stroke-linecap="round" stroke-linejoin="round"/><path d="M4.4 7.6 L7 10.8 M7 7.6 L4.4 10.8 M8.2 8.2 L10.8 11 M10.8 8.2 L8.2 11" stroke="#333" stroke-width="0.8" stroke-linecap="round"/></svg>
<div class="t" style="left:61.50px;top:587.95px;font-size:8.92px;line-height:10.70px;color:#222;font-weight:bold;transform:scaleX(0.9346);transform-origin:0 50%;">Accessibility: Investigate</div>
<div style="left:786.3px;top:583.3px;width:31.7px;height:18.6px;background:#e3e3e3;"></div>
<svg style="left:796px;top:587.4px;" width="11.5" height="11.5" viewBox="0 0 11.5 11.5"><rect x="0.5" y="0.5" width="10.4" height="10.4" fill="none" stroke="#333" stroke-width="0.9"/><path d="M0.5 4 H10.9 M0.5 7.4 H10.9 M4 0.5 V10.9 M7.4 0.5 V10.9" stroke="#333" stroke-width="0.8"/></svg>
<svg style="left:828.2px;top:587.4px;" width="12" height="11.5" viewBox="0 0 12 11.5"><rect x="0.5" y="0.5" width="10.8" height="10.4" fill="none" stroke="#444" stroke-width="0.9"/><rect x="2.8" y="2.6" width="6.2" height="6.2" fill="none" stroke="#444" stroke-width="0.8"/><path d="M4.2 4.4 H7.6 M4.2 5.8 H7.6 M4.2 7.2 H7.6" stroke="#444" stroke-width="0.6"/></svg>
<svg style="left:860px;top:587.4px;" width="12.5" height="11.5" viewBox="0 0 12.5 11.5"><rect x="0.5" y="0.5" width="11.2" height="10.4" fill="none" stroke="#444" stroke-width="0.9"/><path d="M3.4 0.5 V5.6 H7.6 V0.5" fill="none" stroke="#444" stroke-width="0.9"/></svg>
<div style="left:887.6px;top:592.6px;width:4px;height:0.8px;background:#8a8a8a;"></div>
<div style="left:897px;top:592.6px;width:78.3px;height:0.8px;background:#8a8a8a;"></div>
<div style="left:936.2px;top:587.6px;width:2.6px;height:10.2px;background:#555;border-radius:0.8px"></div>
<svg style="left:979.5px;top:589.2px;" width="7.5" height="7.5" viewBox="0 0 7.5 7.5"><path d="M3.7 0.4 V7 M0.4 3.7 H7" stroke="#8a8a8a" stroke-width="0.8"/></svg>
<div class="t" style="left:996.70px;top:587.90px;font-size:8.83px;line-height:10.59px;color:#666;transform:scaleX(0.9346);transform-origin:0 50%;">105%</div>
<div style="left:0;top:601.9px;width:1024px;height:38.1px;background:linear-gradient(90deg,#cfe7ee 0%,#d2e8ed 32%,#d9eae6 50%,#e9f0cd 57%,#ebf0c9 61%,#deeed9 67%,#d6ecea 73%,#cbebea 80%,#c3ebe7 90%,#cbeee0 100%)"></div>
<div style="left:0px;top:601.9px;width:1024px;height:0.7px;background:rgba(120,140,140,.25);"></div>
<svg style="left:16.6px;top:612px;" width="19" height="19" viewBox="0 0 19 19"><defs><linearGradient id="wl" x1="0" y1="0" x2="1" y2="1"><stop offset="0" stop-color="#4cc2f1"/><stop offset="1" stop-color="#0a74d9"/></linearGradient></defs><g fill="url(#wl)"><rect x="0" y="0" width="8.9" height="8.9"/><rect x="9.8" y="0" width="8.9" height="8.9"/><rect x="0" y="9.8" width="8.9" height="8.9"/><rect x="9.8" y="9.8" width="8.9" height="8.9"/></g></svg>
<div style="left:46.9px;top:608.6px;width:173.4px;height:24.6px;background:rgba(248,252,252,.85);border-radius:12.3px;box-shadow:0 0.5px 1.5px rgba(0,0,0,.25)"></div>
<svg style="left:55.5px;top:614px;" width="13" height="14" viewBox="0 0 13 14"><circle cx="5.4" cy="5.6" r="4.3" fill="none" stroke="#222" stroke-width="1.3"/><path d="M8.6 9 L11.6 12.4" stroke="#222" stroke-width="1.4" stroke-linecap="round"/></svg>
<div class="t" style="left:75.80px;top:615.78px;font-size:10.87px;line-height:13.05px;color:#666;transform:scaleX(0.9346);transform-origin:0 50%;">Search</div>
<svg style="left:178px;top:610px;" width="42" height="22" viewBox="0 0 42 22"><defs><clipPath id="sp"><rect x="0" y="0" width="42" height="22" rx="11"/></clipPath></defs><g clip-path="url(#sp)"><rect width="42" height="22" fill="#c9dff0"/><ellipse cx="12" cy="21" rx="16" ry="5" fill="#eef5fb"/><ellipse cx="34" cy="22" rx="12" ry="5" fill="#e4eef8"/><circle cx="13" cy="15" r="5.4" fill="#fbfdff"/><circle cx="13" cy="7.6" r="3.7" fill="#fbfdff"/><path d="M12.5 8 L15.6 8.8 L12.5 9.2Z" fill="#f08a2a"/><path d="M16.5 11 L21 6.5 M8.8 11.5 L4.6 8.2" stroke="#5a4636" stroke-width="0.7"/><path d="M30 20 V9.5 L31.6 5 L33.2 9.5 V20 Z" fill="#8fb3de"/><path d="M27 20 H36" stroke="#b8cfe8" stroke-width="2"/></g></svg>
<svg style="left:231.4px;top:611.4px;" width="20" height="19" viewBox="0 0 20 19"><rect x="4.8" y="0.4" width="14.6" height="12.8" rx="1.6" fill="#f7f8f8" stroke="#dfe3e3" stroke-width="0.5"/><rect x="0.2" y="5.4" width="14" height="13" rx="1.6" fill="#1f1f1f"/><path d="M4.8 5.4 H14.2 V13.2 H6.4 A1.6 1.6 0 0 1 4.8 11.6 Z" fill="#a9abab"/></svg>
<svg style="left:266.6px;top:612.5px;" width="19.5" height="17.5" viewBox="0 0 19.5 17.5"><path d="M0.6 2 A1.4 1.4 0 0 1 2 0.6 H6.6 L8.6 2.8 H18 A1 1 0 0 1 19 3.8 V6 H0.6 Z" fill="#e9a820"/><rect x="0.6" y="3.6" width="18.4" height="13.4" rx="1.4" fill="#fbd04a"/><path d="M0.6 10 H19 V15.6 A1.4 1.4 0 0 1 17.6 17 H2 A1.4 1.4 0 0 1 0.6 15.6 Z" fill="#f6c233"/><rect x="5" y="11.8" width="9.6" height="5.2" rx="1.2" fill="#2f8fe0"/><rect x="7" y="13.6" width="5.6" height="1.2" rx="0.6" fill="#1a5fb0"/></svg>
<svg style="left:301.7px;top:612px;" width="19.5" height="19.5" viewBox="0 0 19.5 19.5"><circle cx="9.75" cy="9.75" r="9.75" fill="#fbc116"/><path d="M9.75 9.75 L1.31 4.88 A9.75 9.75 0 0 1 18.19 4.88 Z" fill="#e33b2e"/><path d="M9.75 9.75 L1.31 4.88 A9.75 9.75 0 0 0 9.75 19.5 Z" fill="#2ba24c"/><circle cx="9.75" cy="9.75" r="4.49" fill="#fff"/><circle cx="9.75" cy="9.75" r="3.51" fill="#3f7fe8"/></svg>
<div style="left:314px;top:607.5px;width:11.6px;height:11.6px;border-radius:6px;background:radial-gradient(circle at 50% 45%,#d9b49a 0 32%,#5a4030 34% 100%)"></div>
<div style="left:309.2px;top:634.2px;width:5px;height:1.9px;background:#6a6a6a;border-radius:1px"></div>
<svg style="left:336.6px;top:611.6px;" width="18.5" height="18.5" viewBox="0 0 18.5 18.5"><defs><linearGradient id="wg" x1="0" y1="0" x2="0.4" y2="1"><stop offset="0" stop-color="#7fd3fa"/><stop offset="0.45" stop-color="#2f8df0"/><stop offset="1" stop-color="#1248c8"/></linearGradient></defs><rect x="4.6" y="0.6" width="13.2" height="17.2" rx="2.4" fill="url(#wg)"/><rect x="4.6" y="6.2" width="13.2" height="5.2" fill="#2a7be8" opacity=".55"/><rect x="0.4" y="7" width="9" height="9" rx="1.6" fill="#1747b8"/><path d="M2.2 9.2 L3.4 13.8 L4.9 10.2 L6.4 13.8 L7.6 9.2" fill="none" stroke="#fff" stroke-width="0.95" stroke-linejoin="round" stroke-linecap="round"/></svg>
<div style="left:343.6px;top:634.2px;width:5px;height:1.9px;background:#6a6a6a;border-radius:1px"></div>
<svg style="left:372px;top:611.6px;" width="19.5" height="19" viewBox="0 0 19.5 19"><defs><linearGradient id="pp" x1="0" y1="0" x2="1" y2="1"><stop offset="0" stop-color="#ff9a6b"/><stop offset="0.5" stop-color="#f0503c"/><stop offset="1" stop-color="#c92a3a"/></linearGradient></defs><path d="M10.6 0.6 A8.8 8.8 0 1 1 3.2 14.4 L3.2 6 A8.8 8.8 0 0 1 10.6 0.6Z" fill="url(#pp)"/><path d="M10.6 0.6 A8.8 8.8 0 0 1 19.4 9.4 C16 10.6 12.6 8.6 10.6 0.6Z" fill="#ffb58f"/><rect x="0.4" y="7.4" width="8.6" height="8.6" rx="1.6" fill="#c22f2a"/><path d="M3.4 14 V9.4 H5.1 A1.4 1.4 0 0 1 5.1 12.2 H3.4" fill="none" stroke="#fff" stroke-width="1"/></svg>
<svg style="left:407px;top:612px;" width="18" height="18" viewBox="0 0 18 18"><rect x="4.4" y="0.6" width="13" height="16.8" rx="1.6" fill="#21a366"/><rect x="4.4" y="0.6" width="6.5" height="5.6" fill="#33c481"/><rect x="10.9" y="0.6" width="6.5" height="5.6" rx="1" fill="#21a366"/><rect x="4.4" y="6.2" width="6.5" height="5.6" fill="#107c41"/><rect x="10.9" y="6.2" width="6.5" height="5.6" fill="#21a366"/><rect x="4.4" y="11.8" width="13" height="5.6" rx="1" fill="#185c37"/><rect x="10.9" y="6.2" width="6.5" height="5.6" fill="#107c41"/><rect x="10.9" y="0.6" width="6.5" height="5.6" fill="#33c481"/><rect x="4.4" y="0.6" width="6.5" height="5.6" fill="#21a366"/><rect x="0.4" y="4.6" width="9.2" height="9.2" rx="1.2" fill="#107c41"/><path d="M3 6.8 L7 11.6 M7 6.8 L3 11.6" stroke="#fff" stroke-width="1.1" stroke-linecap="round"/></svg>
<div style="left:414px;top:634.2px;width:5px;height:1.9px;background:#6a6a6a;border-radius:1px"></div>
<div style="left:442.5px;top:611.6px;width:19.5px;height:19.5px;border-radius:9px;background:linear-gradient(160deg,#3f8cff,#0b5cff)"></div>
<div class="t" style="left:444.99px;top:618.04px;font-size:5.60px;line-height:6.72px;color:#fff;font-weight:bold;">zoom</div>
<svg style="left:478.6px;top:612px;" width="18" height="18" viewBox="0 0 18 18"><rect x="0.3" y="0.3" width="17.4" height="17.4" rx="2.6" fill="#1d3a66" stroke="#3a5f96" stroke-width="0.6"/><path d="M8.2 15 C8.6 11.6 8.4 9.4 9 6.6" fill="none" stroke="#e6d45a" stroke-width="1.1"/><g fill="#e6d45a"><circle cx="5.4" cy="5.2" r="1.5"/><circle cx="8.4" cy="3.8" r="1.6"/><circle cx="11.6" cy="4.6" r="1.6"/><circle cx="13.2" cy="7" r="1.3"/><circle cx="4.4" cy="7.6" r="1.2"/><circle cx="7" cy="6.8" r="1.4"/><circle cx="10.4" cy="7.4" r="1.3"/></g><path d="M6 14.8 H11" stroke="#e6d45a" stroke-width="0.8"/><rect x="11.4" y="10.4" width="4" height="2.6" fill="#e6d45a" opacity=".8"/></svg>
<svg style="left:512.6px;top:611.6px;" width="20" height="20" viewBox="0 0 20 20"><path d="M10 1.2 A8.6 8.6 0 1 1 5.6 17.2 L1.2 18.6 L2.6 14.4 A8.6 8.6 0 0 1 10 1.2 Z" fill="#f2fbf4" stroke="#1fa855" stroke-width="1.7" stroke-linejoin="round"/><path d="M6.6 5.8 C5.6 6.6 5.8 8.6 7.6 10.8 C9.6 13.2 11.8 14.2 13.2 13.6 C14.2 13 14.2 12.2 13.8 11.8 L12.2 11 L11.2 12 C10 11.6 8.6 10.2 8.2 9 L9.2 8 L8.4 6.2 C8 5.6 7.2 5.4 6.6 5.8 Z" fill="#1fa855"/></svg>
<svg style="left:548px;top:612px;" width="19.5" height="19.5" viewBox="0 0 19.5 19.5"><circle cx="9.75" cy="9.75" r="9.75" fill="#fbc116"/><path d="M9.75 9.75 L1.31 4.88 A9.75 9.75 0 0 1 18.19 4.88 Z" fill="#e33b2e"/><path d="M9.75 9.75 L1.31 4.88 A9.75 9.75 0 0 0 9.75 19.5 Z" fill="#2ba24c"/><circle cx="9.75" cy="9.75" r="4.49" fill="#fff"/><circle cx="9.75" cy="9.75" r="3.51" fill="#3f7fe8"/></svg>
<div style="left:559.6px;top:610.6px;width:9.2px;height:9.2px;border-radius:5px;background:#1fa0a8"></div>
<div class="t" style="left:562.25px;top:612.06px;font-size:5.40px;line-height:6.48px;color:#fff;">R</div>
<svg style="left:681.5px;top:609.5px;" width="19" height="19" viewBox="0 0 19 19"><defs><mask id="mn"><rect width="19" height="19" fill="#fff"/><circle cx="7.6" cy="6.6" r="7.2" fill="#000"/></mask><linearGradient id="mg" x1="0" y1="0" x2="1" y2="1"><stop offset="0" stop-color="#f7b02c"/><stop offset="1" stop-color="#ee6a2a"/></linearGradient></defs><circle cx="10" cy="10" r="8.6" fill="url(#mg)" mask="url(#mn)"/><path d="M2.2 9.6 A2.1 2.1 0 0 1 2.8 5.6 A3.1 3.1 0 0 1 8.6 5 A2.3 2.3 0 0 1 9.6 9.6 Z" fill="#dfe8f6" stroke="#b4c4e0" stroke-width="0.4"/></svg>
<div style="left:690.6px;top:606.9px;width:12.2px;height:12.2px;border-radius:6.1px;background:#d3231d"></div>
<div class="t" style="left:694.36px;top:608.06px;font-size:8.40px;line-height:10.08px;color:#fff;font-weight:bold;">4</div>
<div class="t" style="left:706.90px;top:608.55px;font-size:9.42px;line-height:11.31px;color:#333;transform:scaleX(0.9346);transform-origin:0 50%;">58°F</div>
<div class="t" style="left:706.90px;top:621.25px;font-size:10.25px;line-height:12.30px;color:#6a6a6a;transform:scaleX(0.9346);transform-origin:0 50%;">Mostly clear</div>
<svg style="left:812.2px;top:618.15px;" width="9" height="5.5" viewBox="0 0 9 5.5"><path d="M1 4.5 L4.5 1 L8 4.5" fill="none" stroke="#222" stroke-width="1.3" stroke-linecap="round" stroke-linejoin="round"/></svg>
<svg style="left:835.5px;top:614px;" width="14" height="13" viewBox="0 0 14 13"><path d="M3.8 9.6 A3.2 3.2 0 0 1 4.2 3.4 A4 4 0 0 1 11.2 4.4 A2.8 2.8 0 0 1 12 9" fill="#dfe5e8" stroke="#666" stroke-width="0.9"/><circle cx="9.8" cy="9.4" r="3" fill="#1f8fe8"/><path d="M8.4 9.4 A1.4 1.4 0 0 1 11 8.8 M11.2 9.6 A1.4 1.4 0 0 1 8.6 10.2" fill="none" stroke="#fff" stroke-width="0.6"/></svg>
<div class="t" style="left:863.60px;top:615.64px;font-size:8.94px;line-height:10.72px;color:#222;transform:scaleX(0.9346);transform-origin:0 50%;">ENG</div>
<svg style="left:896.4px;top:615px;" width="13" height="11" viewBox="0 0 13 11"><path d="M0.8 3.8 A8.2 8.2 0 0 1 12.2 3.8 M2.6 5.8 A5.6 5.6 0 0 1 10.4 5.8 M4.4 7.8 A3 3 0 0 1 8.6 7.8" fill="none" stroke="#222" stroke-width="1" stroke-linecap="round"/><circle cx="6.5" cy="9.6" r="0.9" fill="#222"/></svg>
<svg style="left:916px;top:615px;" width="12.5" height="11" viewBox="0 0 12.5 11"><path d="M0.8 3.8 H2.8 L5.6 1.2 V9.8 L2.8 7.2 H0.8 Z" fill="none" stroke="#222" stroke-width="0.9" stroke-linejoin="round"/><path d="M7.4 3.6 A2.8 2.8 0 0 1 7.4 7.4" fill="none" stroke="#222" stroke-width="0.9" stroke-linecap="round"/><path d="M9 2 A5 5 0 0 1 9 9" fill="none" stroke="#9a9a9a" stroke-width="0.8" stroke-linecap="round"/><path d="M10.6 0.8 A7 7 0 0 1 10.6 10.2" fill="none" stroke="#c2c2c2" stroke-width="0.7" stroke-linecap="round"/></svg>
<svg style="left:935.3px;top:616.6px;" width="16" height="8.4" viewBox="0 0 16 8.4"><rect x="0.6" y="0.6" width="13" height="7" rx="2" fill="none" stroke="#222" stroke-width="1"/><rect x="2" y="2" width="5" height="4.2" rx="0.8" fill="#222"/><path d="M14.6 2.8 V5.4" stroke="#222" stroke-width="1.2" stroke-linecap="round"/></svg>
<div class="t" style="left:974.00px;top:608.29px;font-size:9.85px;line-height:11.83px;color:#222;transform:scaleX(0.9346);transform-origin:0 50%;">6:00 PM</div>
<div class="t" style="left:964.40px;top:620.46px;font-size:10.56px;line-height:12.67px;color:#222;transform:scaleX(0.9346);transform-origin:0 50%;">1/18/2026</div>
</body></html>
